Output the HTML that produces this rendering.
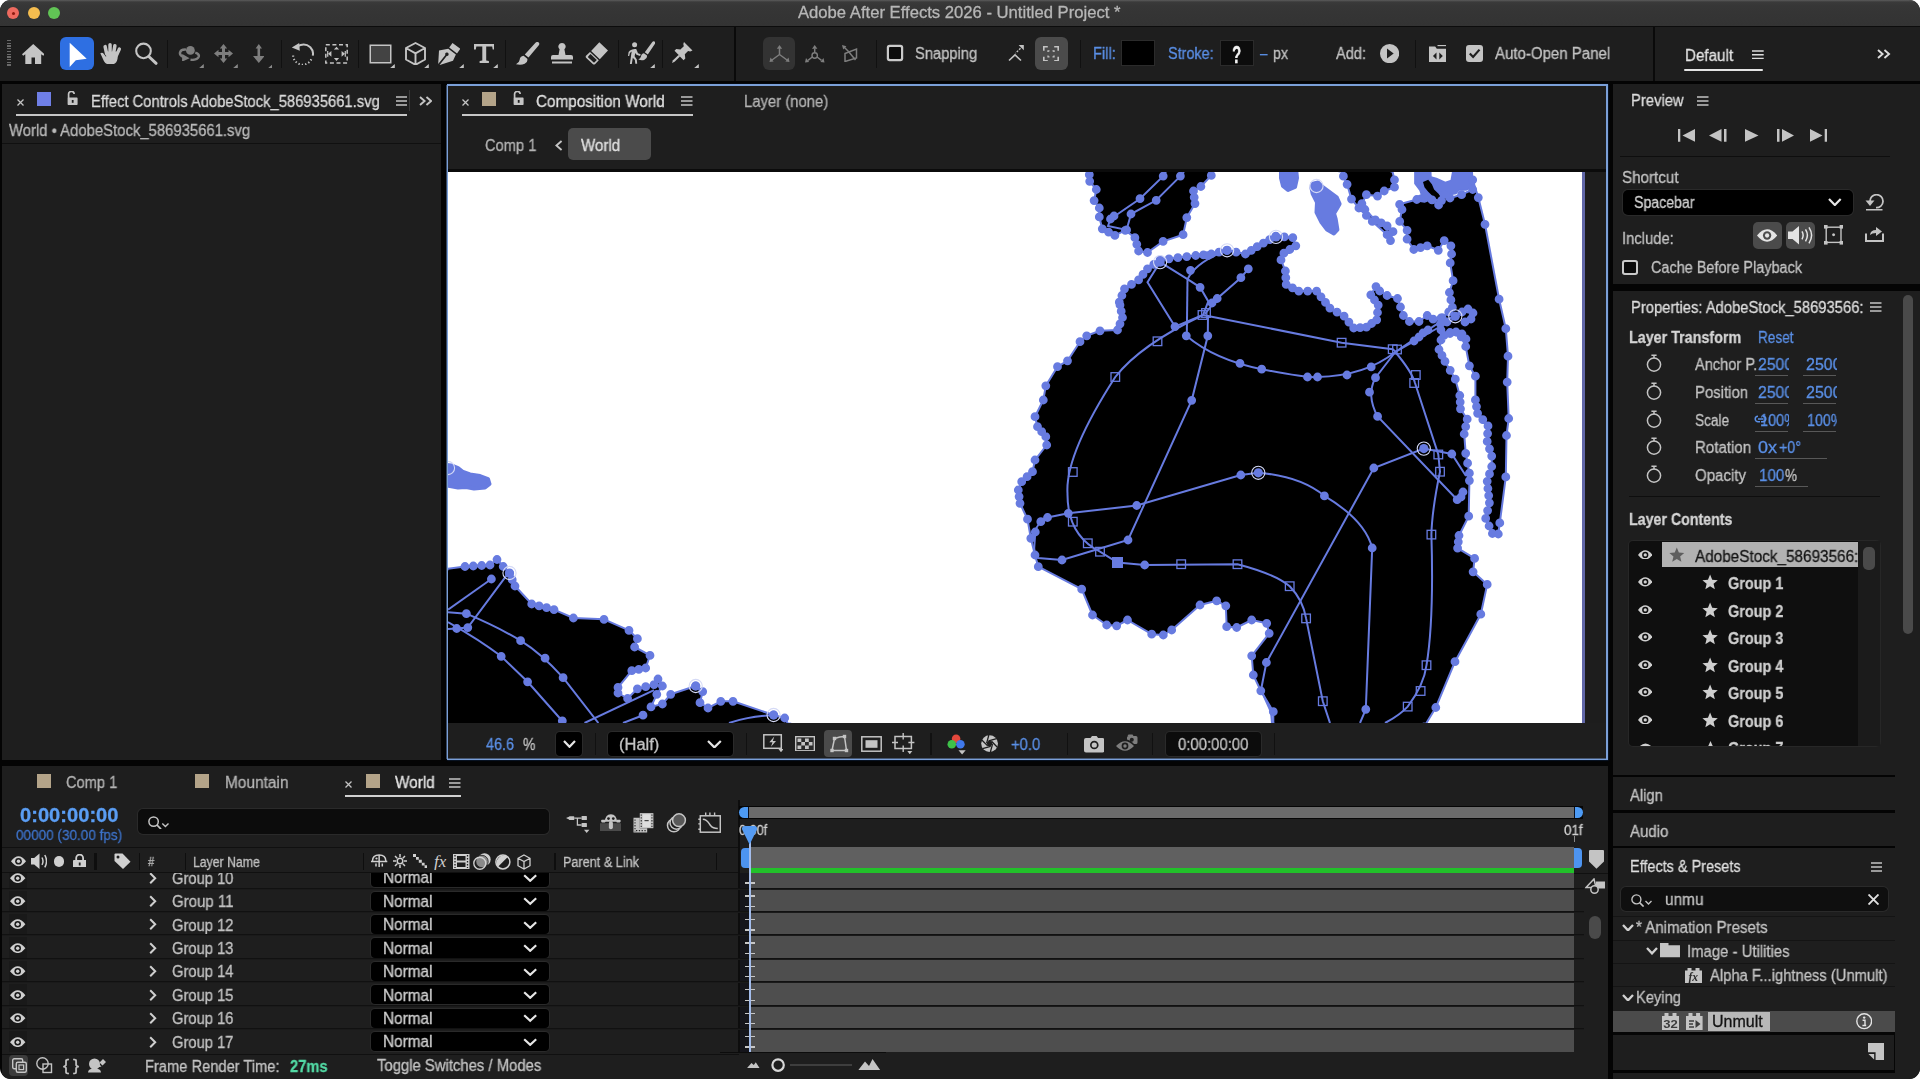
<!DOCTYPE html>
<html><head><meta charset="utf-8"><title>Adobe After Effects 2026</title><style>
html,body{margin:0;padding:0;background:#fff;}
body{width:1920px;height:1079px;overflow:hidden;position:relative;font-family:"Liberation Sans",sans-serif;}
#win{position:absolute;left:0;top:0;width:1920px;height:1079px;background:#040404;border-radius:11px;overflow:hidden;}
#win div,#win svg,#win span{position:absolute;}
#win span{white-space:pre;transform-origin:0 0;line-height:1;will-change:transform;-webkit-text-stroke:0.3px;}
</style></head><body><div id="win">
<div style="left:0px;top:0px;width:1920px;height:26px;background:linear-gradient(#5c5c5c 0px,#3a3a3a 2px,#363636 6px,#333333 26px);"></div>
<div style="left:0px;top:26px;width:1920px;height:1px;background:#0c0c0c;"></div>
<div style="left:7px;top:7px;width:12px;height:12px;background:#ee6a5f;border-radius:50%;"></div>
<div style="left:11.5px;top:11.5px;width:3px;height:3px;background:#8c1a10;border-radius:50%;"></div>
<div style="left:27.5px;top:7px;width:12px;height:12px;background:#f5bd4f;border-radius:50%;"></div>
<div style="left:48.4px;top:7px;width:12px;height:12px;background:#61c455;border-radius:50%;"></div>
<span style="left:797.5px;top:4.96px;font-size:16px;line-height:16px;color:#b6b6b6;font-weight:400;transform:scaleX(1.0400);">Adobe After Effects 2026 - Untitled Project *</span>
<div style="left:0px;top:27px;width:1920px;height:54px;background:#1e1e1e;"></div>
<div style="left:734px;top:27px;width:2px;height:54px;background:#0a0a0a;"></div>
<div style="left:1653px;top:27px;width:2px;height:54px;background:#0a0a0a;"></div>
<div style="left:167px;top:40px;width:1.2px;height:28px;background:#111111;"></div>
<div style="left:280.5px;top:40px;width:1.2px;height:28px;background:#111111;"></div>
<div style="left:357.8px;top:40px;width:1.2px;height:28px;background:#111111;"></div>
<div style="left:505.2px;top:40px;width:1.2px;height:28px;background:#111111;"></div>
<div style="left:618px;top:40px;width:1.2px;height:28px;background:#111111;"></div>
<div style="left:662.3px;top:40px;width:1.2px;height:28px;background:#111111;"></div>
<div style="left:876.2px;top:40px;width:1.2px;height:28px;background:#111111;"></div>
<div style="left:1080.2px;top:40px;width:1.2px;height:28px;background:#111111;"></div>
<div style="left:1415px;top:40px;width:1.2px;height:28px;background:#111111;"></div>
<span style="left:915.3px;top:46.06px;font-size:16px;line-height:16px;color:#c2c2c2;font-weight:400;transform:scaleX(0.9198);">Snapping</span>
<span style="left:1093px;top:46.06px;font-size:16px;line-height:16px;color:#5a8fe6;font-weight:400;transform:scaleX(0.9160);">Fill:</span>
<div style="left:1122px;top:41px;width:32px;height:24px;background:#000;box-shadow:0 0 0 1px #2b2b2b;"></div>
<span style="left:1168.3px;top:46.06px;font-size:16px;line-height:16px;color:#5a8fe6;font-weight:400;transform:scaleX(0.9016);">Stroke:</span>
<div style="left:1221px;top:41px;width:32px;height:24px;background:#0c0c0c;box-shadow:0 0 0 1px #2b2b2b;"></div>
<span style="left:1232px;top:43.48px;font-size:24px;line-height:24px;color:#f2f2f2;font-weight:700;transform:scaleX(0.6339);">?</span>
<span style="left:1260px;top:46.06px;font-size:16px;line-height:16px;color:#5a8fe6;font-weight:400;transform:scaleX(0.8421);">–</span>
<span style="left:1272.8px;top:46.06px;font-size:16px;line-height:16px;color:#c2c2c2;font-weight:400;transform:scaleX(0.8872);">px</span>
<span style="left:1336.3px;top:46.06px;font-size:16px;line-height:16px;color:#c2c2c2;font-weight:400;transform:scaleX(0.9112);">Add:</span>
<span style="left:1495.4px;top:46.06px;font-size:16px;line-height:16px;color:#c2c2c2;font-weight:400;transform:scaleX(0.9385);">Auto-Open Panel</span>
<span style="left:1685.2px;top:47.43px;font-size:16.5px;line-height:16.5px;color:#e2e2e2;font-weight:400;transform:scaleX(0.9200);">Default</span>
<div style="left:1684px;top:68.5px;width:79px;height:2.5px;background:#e4e4e4;border-radius:1px;"></div>
<div style="left:2px;top:84px;width:439px;height:676px;background:#1e1e1e;"></div>
<span style="left:91.3px;top:94.36px;font-size:16px;line-height:16px;color:#dadada;font-weight:400;transform:scaleX(0.9229);">Effect Controls AdobeStock_586935661.svg</span>
<div style="left:16px;top:113.8px;width:391px;height:1.8px;background:#c6c6c6;"></div>
<div style="left:408.5px;top:90px;width:1px;height:21px;background:#3a3a3a;"></div>
<span style="left:8.8px;top:122.66px;font-size:16px;line-height:16px;color:#b9b9b9;font-weight:400;transform:scaleX(0.9287);">World • AdobeStock_586935661.svg</span>
<div style="left:2px;top:142.5px;width:439px;height:1.3px;background:#101010;"></div>
<div style="left:36.8px;top:92px;width:14.5px;height:13.8px;background:#6f7fe6;"></div>
<div style="left:446.5px;top:84.2px;width:1161.6px;height:675.9px;background:#7a9fd8;box-shadow:0 0 1.5px 0.5px #163462;"></div>
<div style="left:448.1px;top:85.7px;width:1158.3px;height:672.9px;background:#1e1e1e;"></div>
<div style="left:446px;top:85px;width:1px;height:674px;background:#394a63;"></div>
<div style="left:448px;top:758px;width:1158px;height:1px;background:#475872;"></div>
<div style="left:482px;top:92px;width:14.3px;height:13.8px;background:#b4a489;"></div>
<span style="left:536.3px;top:94.36px;font-size:16px;line-height:16px;color:#e0e0e0;font-weight:400;transform:scaleX(0.9542);">Composition World</span>
<div style="left:462px;top:113.8px;width:230.5px;height:1.8px;background:#c6c6c6;"></div>
<span style="left:743.8px;top:94.36px;font-size:16px;line-height:16px;color:#b4b4b4;font-weight:400;transform:scaleX(0.9281);">Layer (none)</span>
<span style="left:485px;top:138.16px;font-size:16px;line-height:16px;color:#b4b4b4;font-weight:400;transform:scaleX(0.9156);">Comp 1</span>
<div style="left:568px;top:128.3px;width:83.3px;height:32.2px;background:#4b4b4b;border-radius:5px;"></div>
<span style="left:580.8px;top:138.16px;font-size:16px;line-height:16px;color:#e0e0e0;font-weight:400;transform:scaleX(0.9446);">World</span>
<div style="left:448px;top:169px;width:1158px;height:3px;background:#0b0b0b;"></div>
<div style="left:448px;top:172px;width:1134px;height:551px;background:#ffffff;"></div>
<div style="left:1582px;top:172px;width:3px;height:551px;background:#6167a8;"></div>
<div style="left:1585px;top:172px;width:21px;height:551px;background:#1d1d1d;"></div>
<span style="left:486px;top:736.76px;font-size:16px;line-height:16px;color:#5a8fe6;font-weight:400;transform:scaleX(0.8991);">46.6</span>
<span style="left:523px;top:736.76px;font-size:16px;line-height:16px;color:#c2c2c2;font-weight:400;transform:scaleX(0.8711);">%</span>
<div style="left:555.6px;top:732px;width:26.8px;height:24px;background:#000;border-radius:4px;box-shadow:0 0 0 1px #2a2a2a;"></div>
<div style="left:594.5px;top:733px;width:1.2px;height:22px;background:#111;"></div>
<div style="left:608px;top:732px;width:125.4px;height:24px;background:#000;border-radius:4px;box-shadow:0 0 0 1px #2a2a2a;"></div>
<span style="left:619.2px;top:736.76px;font-size:16px;line-height:16px;color:#c2c2c2;font-weight:400;transform:scaleX(1.0304);">(Half)</span>
<div style="left:745.9px;top:733px;width:1.2px;height:22px;background:#111;"></div>
<div style="left:824.3px;top:730px;width:27.7px;height:27px;background:#4b4b4b;border-radius:4px;"></div>
<div style="left:930.4px;top:733px;width:1.2px;height:22px;background:#111;"></div>
<span style="left:1011px;top:736.76px;font-size:16px;line-height:16px;color:#5a8fe6;font-weight:400;transform:scaleX(0.9242);">+0.0</span>
<div style="left:1067px;top:733px;width:1.2px;height:22px;background:#111;"></div>
<div style="left:1152px;top:733px;width:1.2px;height:22px;background:#111;"></div>
<div style="left:1165.6px;top:732.2px;width:95px;height:24.2px;background:#0c0c0c;border-radius:4px;box-shadow:0 0 0 1px #2a2a2a;"></div>
<span style="left:1178.1px;top:736.76px;font-size:16px;line-height:16px;color:#c2c2c2;font-weight:400;transform:scaleX(0.9309);">0:00:00:00</span>
<div style="left:1274px;top:733px;width:1.2px;height:22px;background:#111;"></div>
<div style="left:1613.2px;top:84px;width:306.8px;height:200px;background:#1e1e1e;"></div>
<span style="left:1630.6px;top:93.46px;font-size:16px;line-height:16px;color:#dcdcdc;font-weight:400;transform:scaleX(0.9243);">Preview</span>
<div style="left:1620px;top:156px;width:270px;height:1.3px;background:#0e0e0e;"></div>
<span style="left:1622px;top:169.96px;font-size:16px;line-height:16px;color:#c2c2c2;font-weight:400;transform:scaleX(0.9481);">Shortcut</span>
<div style="left:1622.8px;top:190.1px;width:230.5px;height:24.5px;background:#000;border-radius:5px;box-shadow:0 0 0 1px #2a2a2a;"></div>
<span style="left:1634.3px;top:195.46px;font-size:16px;line-height:16px;color:#d0d0d0;font-weight:400;transform:scaleX(0.8832);">Spacebar</span>
<span style="left:1622px;top:230.56px;font-size:16px;line-height:16px;color:#c2c2c2;font-weight:400;transform:scaleX(0.9242);">Include:</span>
<div style="left:1752.6px;top:221.7px;width:29.5px;height:27.2px;background:#4b4b4b;border-radius:5px;"></div>
<div style="left:1785.6px;top:221.7px;width:29.6px;height:27.2px;background:#4b4b4b;border-radius:5px;"></div>
<span style="left:1651px;top:260.06px;font-size:16px;line-height:16px;color:#c2c2c2;font-weight:400;transform:scaleX(0.9031);">Cache Before Playback</span>
<div style="left:1613.2px;top:290.5px;width:306.8px;height:484.5px;background:#1e1e1e;"></div>
<span style="left:1630.6px;top:299.96px;font-size:16px;line-height:16px;color:#dcdcdc;font-weight:400;transform:scaleX(0.9235);">Properties: AdobeStock_58693566:</span>
<div style="left:1902.5px;top:295.3px;width:10.4px;height:339px;background:#4a4a4a;border-radius:5px;"></div>
<span style="left:1629.2px;top:329.56px;font-size:16px;line-height:16px;color:#d6d6d6;font-weight:700;transform:scaleX(0.8940);">Layer Transform</span>
<span style="left:1758.3px;top:329.56px;font-size:16px;line-height:16px;color:#5a8fe6;font-weight:400;transform:scaleX(0.8493);">Reset</span>
<span style="left:1694.8px;top:357.06px;font-size:16px;line-height:16px;color:#c2c2c2;font-weight:400;transform:scaleX(0.9120);">Anchor P.</span>
<span style="left:1758px;top:357.06px;font-size:16px;line-height:16px;color:#5a8fe6;font-weight:400;transform:scaleX(0.9833);">2500</span>
<span style="left:1805.6px;top:357.06px;font-size:16px;line-height:16px;color:#5a8fe6;font-weight:400;transform:scaleX(0.9946);">2500</span>
<span style="left:1694.8px;top:384.66px;font-size:16px;line-height:16px;color:#c2c2c2;font-weight:400;transform:scaleX(0.9329);">Position</span>
<span style="left:1758px;top:384.66px;font-size:16px;line-height:16px;color:#5a8fe6;font-weight:400;transform:scaleX(0.9833);">2500</span>
<span style="left:1805.6px;top:384.66px;font-size:16px;line-height:16px;color:#5a8fe6;font-weight:400;transform:scaleX(0.9946);">2500</span>
<span style="left:1694.8px;top:412.56px;font-size:16px;line-height:16px;color:#c2c2c2;font-weight:400;transform:scaleX(0.8518);">Scale</span>
<span style="left:1760px;top:412.56px;font-size:16px;line-height:16px;color:#5a8fe6;font-weight:400;transform:scaleX(0.9042);">100%</span>
<span style="left:1806.5px;top:412.56px;font-size:16px;line-height:16px;color:#5a8fe6;font-weight:400;transform:scaleX(0.8919);">100%</span>
<span style="left:1694.8px;top:440.36px;font-size:16px;line-height:16px;color:#c2c2c2;font-weight:400;transform:scaleX(0.9414);">Rotation</span>
<span style="left:1758px;top:440.36px;font-size:16px;line-height:16px;color:#5a8fe6;font-weight:400;transform:scaleX(1.1238);">0x</span>
<span style="left:1779px;top:440.36px;font-size:16px;line-height:16px;color:#5a8fe6;font-weight:400;transform:scaleX(0.8928);">+0°</span>
<span style="left:1694.8px;top:467.86px;font-size:16px;line-height:16px;color:#c2c2c2;font-weight:400;transform:scaleX(0.9401);">Opacity</span>
<span style="left:1758.7px;top:467.86px;font-size:16px;line-height:16px;color:#5a8fe6;font-weight:400;transform:scaleX(0.9475);">100</span>
<span style="left:1785px;top:467.86px;font-size:16px;line-height:16px;color:#c2c2c2;font-weight:400;transform:scaleX(0.8430);">%</span>
<div style="left:1789px;top:354px;width:14px;height:20px;background:#1e1e1e;"></div>
<div style="left:1837px;top:354px;width:30px;height:20px;background:#1e1e1e;"></div>
<div style="left:1789px;top:382px;width:14px;height:20px;background:#1e1e1e;"></div>
<div style="left:1837px;top:382px;width:30px;height:20px;background:#1e1e1e;"></div>
<div style="left:1789px;top:410px;width:14px;height:20px;background:#1e1e1e;"></div>
<div style="left:1837px;top:410px;width:30px;height:20px;background:#1e1e1e;"></div>
<div style="left:1755px;top:375.3px;width:32.6px;height:1.2px;background:#585858;"></div>
<div style="left:1803px;top:375.3px;width:32.6px;height:1.2px;background:#585858;"></div>
<div style="left:1755px;top:402.9px;width:32.6px;height:1.2px;background:#585858;"></div>
<div style="left:1803px;top:402.9px;width:32.6px;height:1.2px;background:#585858;"></div>
<div style="left:1755px;top:430.8px;width:32.6px;height:1.2px;background:#585858;"></div>
<div style="left:1803px;top:430.8px;width:32.6px;height:1.2px;background:#585858;"></div>
<div style="left:1755px;top:458.3px;width:72.4px;height:1.2px;background:#585858;"></div>
<div style="left:1755px;top:485.8px;width:53px;height:1.2px;background:#585858;"></div>
<div style="left:1628.6px;top:495.6px;width:251px;height:1.3px;background:#0e0e0e;"></div>
<span style="left:1629px;top:511.66px;font-size:16px;line-height:16px;color:#d6d6d6;font-weight:700;transform:scaleX(0.8878);">Layer Contents</span>
<div style="left:1629px;top:540.6px;width:251.3px;height:205px;background:#0f0f0f;border-radius:4px;box-shadow:0 0 0 1px #272727;"></div>
<div style="left:1858.2px;top:541px;width:22px;height:204.5px;background:#1b1b1b;"></div>
<div style="left:1863.4px;top:547.1px;width:11.2px;height:22.8px;background:#4a4a4a;border-radius:5px;"></div>
<div style="left:1661.5px;top:541.9px;width:196.7px;height:25.4px;background:#b2b2b2;"></div>
<span style="left:1694.7px;top:548.76px;font-size:16px;line-height:16px;color:#161616;font-weight:400;transform:scaleX(0.9560);">AdobeStock_58693566:</span>
<span style="left:1727.7px;top:576.46px;font-size:16px;line-height:16px;color:#cfcfcf;font-weight:700;transform:scaleX(0.9015);">Group 1</span>
<span style="left:1727.7px;top:603.96px;font-size:16px;line-height:16px;color:#cfcfcf;font-weight:700;transform:scaleX(0.9015);">Group 2</span>
<span style="left:1727.7px;top:631.46px;font-size:16px;line-height:16px;color:#cfcfcf;font-weight:700;transform:scaleX(0.9015);">Group 3</span>
<span style="left:1727.7px;top:658.96px;font-size:16px;line-height:16px;color:#cfcfcf;font-weight:700;transform:scaleX(0.9015);">Group 4</span>
<span style="left:1727.7px;top:686.46px;font-size:16px;line-height:16px;color:#cfcfcf;font-weight:700;transform:scaleX(0.9015);">Group 5</span>
<span style="left:1727.7px;top:713.96px;font-size:16px;line-height:16px;color:#cfcfcf;font-weight:700;transform:scaleX(0.9015);">Group 6</span>
<div style="left:1629px;top:738px;width:229px;height:7.6px;overflow:hidden;">
<span style="left:98.7px;top:3.46px;font-size:16px;line-height:16px;color:#cfcfcf;font-weight:700;transform:scaleX(0.9015);">Group 7</span>
<svg style="left:73px;top:3px" width="17" height="16" viewBox="0 0 17 16"><path d="M8.5 0l2.5 5.6 6 .6-4.5 4 1.3 5.8-5.3-3.1-5.3 3.1 1.3-5.8-4.5-4 6-.6z" fill="#cfcfcf"/></svg>
<svg style="left:8.6px;top:5px" width="15" height="10" viewBox="0 0 15 10"><path d="M0 5Q7.5-4 15 5Q7.5 14 0 5z" fill="#cfcfcf"/></svg>
</div>
<div style="left:1613.2px;top:777px;width:281.5px;height:33.3px;background:#1e1e1e;"></div>
<div style="left:1894.5px;top:770px;width:25.5px;height:309px;background:#1e1e1e;"></div>
<span style="left:1630.2px;top:788.16px;font-size:16px;line-height:16px;color:#c2c2c2;font-weight:400;transform:scaleX(0.9219);">Align</span>
<div style="left:1613.2px;top:812.6px;width:281.5px;height:33.2px;background:#1e1e1e;"></div>
<span style="left:1630.2px;top:823.66px;font-size:16px;line-height:16px;color:#c2c2c2;font-weight:400;transform:scaleX(0.9384);">Audio</span>
<div style="left:1613.2px;top:848.1px;width:281.5px;height:222.4px;background:#1e1e1e;"></div>
<div style="left:1613.2px;top:1072.6px;width:281.5px;height:7px;background:#1e1e1e;"></div>
<span style="left:1630.2px;top:859.16px;font-size:16px;line-height:16px;color:#dedede;font-weight:400;transform:scaleX(0.9034);">Effects &amp; Presets</span>
<div style="left:1621.3px;top:886.6px;width:267px;height:24.8px;background:#0f0f0f;border-radius:5px;box-shadow:0 0 0 1px #2a2a2a;"></div>
<span style="left:1665px;top:892.26px;font-size:16px;line-height:16px;color:#c2c2c2;font-weight:400;transform:scaleX(0.9617);">unmu</span>
<div style="left:1613.2px;top:915.9px;width:281.5px;height:1.2px;background:#141414;"></div>
<div style="left:1613.2px;top:939.5px;width:281.5px;height:1.2px;background:#141414;"></div>
<div style="left:1613.2px;top:962.6px;width:281.5px;height:1.2px;background:#141414;"></div>
<div style="left:1613.2px;top:986.3px;width:281.5px;height:1.2px;background:#141414;"></div>
<span style="left:1635.5px;top:920.36px;font-size:16px;line-height:16px;color:#c2c2c2;font-weight:400;transform:scaleX(0.9425);">* Animation Presets</span>
<span style="left:1686.7px;top:944.06px;font-size:16px;line-height:16px;color:#c2c2c2;font-weight:400;transform:scaleX(0.9306);">Image - Utilities</span>
<span style="left:1710px;top:967.66px;font-size:16px;line-height:16px;color:#c2c2c2;font-weight:400;transform:scaleX(0.9241);">Alpha F...ightness (Unmult)</span>
<span style="left:1635.5px;top:990.46px;font-size:16px;line-height:16px;color:#c2c2c2;font-weight:400;transform:scaleX(0.9178);">Keying</span>
<div style="left:1613.2px;top:1010.8px;width:281.5px;height:21.3px;background:#4b4b4b;"></div>
<div style="left:1708px;top:1012px;width:62px;height:19.4px;background:#b8b8b8;"></div>
<span style="left:1711.8px;top:1014.16px;font-size:16px;line-height:16px;color:#141414;font-weight:400;transform:scaleX(0.9904);">Unmult</span>
<div style="left:1613.2px;top:1032.1px;width:281.5px;height:2.6px;background:#060606;"></div>
<div style="left:1894.3px;top:1034px;width:1.2px;height:37px;background:#060606;"></div>
<div style="left:2px;top:765.6px;width:1606.1px;height:313.4px;background:#1e1e1e;"></div>
<div style="left:36.8px;top:773.8px;width:14.4px;height:13.8px;background:#b4a489;"></div>
<div style="left:195px;top:773.8px;width:14.4px;height:13.8px;background:#b4a489;"></div>
<div style="left:365.5px;top:773.8px;width:14.4px;height:13.8px;background:#b4a489;"></div>
<span style="left:66.3px;top:775.36px;font-size:16px;line-height:16px;color:#b4b4b4;font-weight:400;transform:scaleX(0.9138);">Comp 1</span>
<span style="left:224.5px;top:775.36px;font-size:16px;line-height:16px;color:#b4b4b4;font-weight:400;transform:scaleX(0.9646);">Mountain</span>
<span style="left:394.5px;top:775.36px;font-size:16px;line-height:16px;color:#e4e4e4;font-weight:400;transform:scaleX(0.9590);">World</span>
<div style="left:345px;top:795.2px;width:115.5px;height:1.8px;background:#d0d0d0;"></div>
<span style="left:19.5px;top:805.69px;font-size:19.5px;line-height:19.5px;color:#5a9df3;font-weight:700;transform:scaleX(1.0324);">0:00:00:00</span>
<span style="left:16.3px;top:828.13px;font-size:14.5px;line-height:14.5px;color:#3d72c8;font-weight:400;transform:scaleX(0.9343);">00000 (30.00 fps)</span>
<div style="left:138.3px;top:809.3px;width:411.2px;height:25.2px;background:#0c0c0c;border-radius:5px;box-shadow:0 0 0 1px #2a2a2a;"></div>
<div style="left:2px;top:846.6px;width:737px;height:1.3px;background:#101010;"></div>
<div style="left:93.8px;top:853px;width:3.2px;height:17px;background:#0e0e0e;"></div>
<div style="left:138.8px;top:853px;width:1.6px;height:17px;background:#0e0e0e;"></div>
<div style="left:184.5px;top:853px;width:1.6px;height:17px;background:#0e0e0e;"></div>
<div style="left:362.5px;top:853px;width:1.6px;height:17px;background:#0e0e0e;"></div>
<div style="left:554.2px;top:853px;width:1.6px;height:17px;background:#0e0e0e;"></div>
<div style="left:715.8px;top:853px;width:1.6px;height:17px;background:#0e0e0e;"></div>
<span style="left:147.5px;top:855.40px;font-size:13px;line-height:13px;color:#c2c2c2;font-weight:400;transform:scaleX(0.8708);">#</span>
<span style="left:192.5px;top:854.85px;font-size:14px;line-height:14px;color:#c2c2c2;font-weight:400;transform:scaleX(0.8759);">Layer Name</span>
<span style="left:563.3px;top:854.55px;font-size:14px;line-height:14px;color:#c2c2c2;font-weight:400;transform:scaleX(0.9041);">Parent &amp; Link</span>
<div style="left:2px;top:872.2px;width:737px;height:1px;background:#101010;"></div>
<div style="left:2px;top:873px;width:737px;height:181px;overflow:hidden;">
<div style="left:6.7px;top:-5.900000000000045px;width:18.3px;height:21.4px;background:#191919;"></div>
<span style="left:170.2px;top:-2.34px;font-size:16px;line-height:16px;color:#c2c2c2;font-weight:400;transform:scaleX(0.9203);">Group 10</span>
<div style="left:369px;top:-4.800000000000045px;width:178px;height:19.2px;background:#000;border-radius:4px;box-shadow:0 0 0 1px #2a2a2a;"></div>
<span style="left:380.8px;top:-2.54px;font-size:16px;line-height:16px;color:#d0d0d0;font-weight:400;transform:scaleX(0.9600);">Normal</span>
<svg style="left:8.2px;top:-0.4px" width="15.4" height="10.4" viewBox="0 0 15.4 10.4"><path d="M0 5.2Q7.7-4.6 15.4 5.2Q7.7 15 0 5.2z" fill="#cfcfcf"/><circle cx="7.7" cy="5.2" r="3.3" fill="#191919"/><circle cx="7.7" cy="5.2" r="1.7" fill="#cfcfcf"/></svg>
<svg style="left:147.4px;top:-1.4px" width="8" height="12.4" viewBox="0 0 8 12.4"><path d="M1.2 1.2l5 5-5 5" fill="none" stroke="#cfcfcf" stroke-width="2"/></svg>
<svg style="left:521.4px;top:0.8px" width="14.4" height="8.4" viewBox="0 0 14.4 8.4"><path d="M1.2 1.2l6 5.6 6-5.6" fill="none" stroke="#e6e6e6" stroke-width="2.2"/></svg>
<div style="left:6.7px;top:17.519999999999957px;width:18.3px;height:21.4px;background:#191919;"></div>
<span style="left:170.2px;top:21.08px;font-size:16px;line-height:16px;color:#c2c2c2;font-weight:400;transform:scaleX(0.9370);">Group 11</span>
<div style="left:369px;top:18.619999999999955px;width:178px;height:19.2px;background:#000;border-radius:4px;box-shadow:0 0 0 1px #2a2a2a;"></div>
<span style="left:380.8px;top:20.88px;font-size:16px;line-height:16px;color:#d0d0d0;font-weight:400;transform:scaleX(0.9600);">Normal</span>
<svg style="left:8.2px;top:23.0px" width="15.4" height="10.4" viewBox="0 0 15.4 10.4"><path d="M0 5.2Q7.7-4.6 15.4 5.2Q7.7 15 0 5.2z" fill="#cfcfcf"/><circle cx="7.7" cy="5.2" r="3.3" fill="#191919"/><circle cx="7.7" cy="5.2" r="1.7" fill="#cfcfcf"/></svg>
<svg style="left:147.4px;top:22.0px" width="8" height="12.4" viewBox="0 0 8 12.4"><path d="M1.2 1.2l5 5-5 5" fill="none" stroke="#cfcfcf" stroke-width="2"/></svg>
<svg style="left:521.4px;top:24.2px" width="14.4" height="8.4" viewBox="0 0 14.4 8.4"><path d="M1.2 1.2l6 5.6 6-5.6" fill="none" stroke="#e6e6e6" stroke-width="2.2"/></svg>
<div style="left:6.7px;top:40.939999999999955px;width:18.3px;height:21.4px;background:#191919;"></div>
<span style="left:170.2px;top:44.50px;font-size:16px;line-height:16px;color:#c2c2c2;font-weight:400;transform:scaleX(0.9203);">Group 12</span>
<div style="left:369px;top:42.03999999999996px;width:178px;height:19.2px;background:#000;border-radius:4px;box-shadow:0 0 0 1px #2a2a2a;"></div>
<span style="left:380.8px;top:44.30px;font-size:16px;line-height:16px;color:#d0d0d0;font-weight:400;transform:scaleX(0.9600);">Normal</span>
<svg style="left:8.2px;top:46.4px" width="15.4" height="10.4" viewBox="0 0 15.4 10.4"><path d="M0 5.2Q7.7-4.6 15.4 5.2Q7.7 15 0 5.2z" fill="#cfcfcf"/><circle cx="7.7" cy="5.2" r="3.3" fill="#191919"/><circle cx="7.7" cy="5.2" r="1.7" fill="#cfcfcf"/></svg>
<svg style="left:147.4px;top:45.4px" width="8" height="12.4" viewBox="0 0 8 12.4"><path d="M1.2 1.2l5 5-5 5" fill="none" stroke="#cfcfcf" stroke-width="2"/></svg>
<svg style="left:521.4px;top:47.6px" width="14.4" height="8.4" viewBox="0 0 14.4 8.4"><path d="M1.2 1.2l6 5.6 6-5.6" fill="none" stroke="#e6e6e6" stroke-width="2.2"/></svg>
<div style="left:6.7px;top:64.35999999999996px;width:18.3px;height:21.4px;background:#191919;"></div>
<span style="left:170.2px;top:67.92px;font-size:16px;line-height:16px;color:#c2c2c2;font-weight:400;transform:scaleX(0.9203);">Group 13</span>
<div style="left:369px;top:65.45999999999997px;width:178px;height:19.2px;background:#000;border-radius:4px;box-shadow:0 0 0 1px #2a2a2a;"></div>
<span style="left:380.8px;top:67.72px;font-size:16px;line-height:16px;color:#d0d0d0;font-weight:400;transform:scaleX(0.9600);">Normal</span>
<svg style="left:8.2px;top:69.9px" width="15.4" height="10.4" viewBox="0 0 15.4 10.4"><path d="M0 5.2Q7.7-4.6 15.4 5.2Q7.7 15 0 5.2z" fill="#cfcfcf"/><circle cx="7.7" cy="5.2" r="3.3" fill="#191919"/><circle cx="7.7" cy="5.2" r="1.7" fill="#cfcfcf"/></svg>
<svg style="left:147.4px;top:68.9px" width="8" height="12.4" viewBox="0 0 8 12.4"><path d="M1.2 1.2l5 5-5 5" fill="none" stroke="#cfcfcf" stroke-width="2"/></svg>
<svg style="left:521.4px;top:71.1px" width="14.4" height="8.4" viewBox="0 0 14.4 8.4"><path d="M1.2 1.2l6 5.6 6-5.6" fill="none" stroke="#e6e6e6" stroke-width="2.2"/></svg>
<div style="left:6.7px;top:87.77999999999996px;width:18.3px;height:21.4px;background:#191919;"></div>
<span style="left:170.2px;top:91.34px;font-size:16px;line-height:16px;color:#c2c2c2;font-weight:400;transform:scaleX(0.9203);">Group 14</span>
<div style="left:369px;top:88.87999999999997px;width:178px;height:19.2px;background:#000;border-radius:4px;box-shadow:0 0 0 1px #2a2a2a;"></div>
<span style="left:380.8px;top:91.14px;font-size:16px;line-height:16px;color:#d0d0d0;font-weight:400;transform:scaleX(0.9600);">Normal</span>
<svg style="left:8.2px;top:93.3px" width="15.4" height="10.4" viewBox="0 0 15.4 10.4"><path d="M0 5.2Q7.7-4.6 15.4 5.2Q7.7 15 0 5.2z" fill="#cfcfcf"/><circle cx="7.7" cy="5.2" r="3.3" fill="#191919"/><circle cx="7.7" cy="5.2" r="1.7" fill="#cfcfcf"/></svg>
<svg style="left:147.4px;top:92.3px" width="8" height="12.4" viewBox="0 0 8 12.4"><path d="M1.2 1.2l5 5-5 5" fill="none" stroke="#cfcfcf" stroke-width="2"/></svg>
<svg style="left:521.4px;top:94.5px" width="14.4" height="8.4" viewBox="0 0 14.4 8.4"><path d="M1.2 1.2l6 5.6 6-5.6" fill="none" stroke="#e6e6e6" stroke-width="2.2"/></svg>
<div style="left:6.7px;top:111.19999999999996px;width:18.3px;height:21.4px;background:#191919;"></div>
<span style="left:170.2px;top:114.76px;font-size:16px;line-height:16px;color:#c2c2c2;font-weight:400;transform:scaleX(0.9203);">Group 15</span>
<div style="left:369px;top:112.29999999999997px;width:178px;height:19.2px;background:#000;border-radius:4px;box-shadow:0 0 0 1px #2a2a2a;"></div>
<span style="left:380.8px;top:114.56px;font-size:16px;line-height:16px;color:#d0d0d0;font-weight:400;transform:scaleX(0.9600);">Normal</span>
<svg style="left:8.2px;top:116.7px" width="15.4" height="10.4" viewBox="0 0 15.4 10.4"><path d="M0 5.2Q7.7-4.6 15.4 5.2Q7.7 15 0 5.2z" fill="#cfcfcf"/><circle cx="7.7" cy="5.2" r="3.3" fill="#191919"/><circle cx="7.7" cy="5.2" r="1.7" fill="#cfcfcf"/></svg>
<svg style="left:147.4px;top:115.7px" width="8" height="12.4" viewBox="0 0 8 12.4"><path d="M1.2 1.2l5 5-5 5" fill="none" stroke="#cfcfcf" stroke-width="2"/></svg>
<svg style="left:521.4px;top:117.9px" width="14.4" height="8.4" viewBox="0 0 14.4 8.4"><path d="M1.2 1.2l6 5.6 6-5.6" fill="none" stroke="#e6e6e6" stroke-width="2.2"/></svg>
<div style="left:6.7px;top:134.61999999999998px;width:18.3px;height:21.4px;background:#191919;"></div>
<span style="left:170.2px;top:138.18px;font-size:16px;line-height:16px;color:#c2c2c2;font-weight:400;transform:scaleX(0.9203);">Group 16</span>
<div style="left:369px;top:135.71999999999997px;width:178px;height:19.2px;background:#000;border-radius:4px;box-shadow:0 0 0 1px #2a2a2a;"></div>
<span style="left:380.8px;top:137.98px;font-size:16px;line-height:16px;color:#d0d0d0;font-weight:400;transform:scaleX(0.9600);">Normal</span>
<svg style="left:8.2px;top:140.1px" width="15.4" height="10.4" viewBox="0 0 15.4 10.4"><path d="M0 5.2Q7.7-4.6 15.4 5.2Q7.7 15 0 5.2z" fill="#cfcfcf"/><circle cx="7.7" cy="5.2" r="3.3" fill="#191919"/><circle cx="7.7" cy="5.2" r="1.7" fill="#cfcfcf"/></svg>
<svg style="left:147.4px;top:139.1px" width="8" height="12.4" viewBox="0 0 8 12.4"><path d="M1.2 1.2l5 5-5 5" fill="none" stroke="#cfcfcf" stroke-width="2"/></svg>
<svg style="left:521.4px;top:141.3px" width="14.4" height="8.4" viewBox="0 0 14.4 8.4"><path d="M1.2 1.2l6 5.6 6-5.6" fill="none" stroke="#e6e6e6" stroke-width="2.2"/></svg>
<div style="left:6.7px;top:158.03999999999996px;width:18.3px;height:21.4px;background:#191919;"></div>
<span style="left:170.2px;top:161.60px;font-size:16px;line-height:16px;color:#c2c2c2;font-weight:400;transform:scaleX(0.9203);">Group 17</span>
<div style="left:369px;top:159.13999999999996px;width:178px;height:19.2px;background:#000;border-radius:4px;box-shadow:0 0 0 1px #2a2a2a;"></div>
<span style="left:380.8px;top:161.40px;font-size:16px;line-height:16px;color:#d0d0d0;font-weight:400;transform:scaleX(0.9600);">Normal</span>
<svg style="left:8.2px;top:163.5px" width="15.4" height="10.4" viewBox="0 0 15.4 10.4"><path d="M0 5.2Q7.7-4.6 15.4 5.2Q7.7 15 0 5.2z" fill="#cfcfcf"/><circle cx="7.7" cy="5.2" r="3.3" fill="#191919"/><circle cx="7.7" cy="5.2" r="1.7" fill="#cfcfcf"/></svg>
<svg style="left:147.4px;top:162.5px" width="8" height="12.4" viewBox="0 0 8 12.4"><path d="M1.2 1.2l5 5-5 5" fill="none" stroke="#cfcfcf" stroke-width="2"/></svg>
<svg style="left:521.4px;top:164.7px" width="14.4" height="8.4" viewBox="0 0 14.4 8.4"><path d="M1.2 1.2l6 5.6 6-5.6" fill="none" stroke="#e6e6e6" stroke-width="2.2"/></svg>
</div>
<div style="left:2px;top:1053.6px;width:737px;height:1.2px;background:#101010;"></div>
<div style="left:8.7px;top:1054.8px;width:19.8px;height:21px;background:#3c3c3c;border-radius:4px;"></div>
<span style="left:144.5px;top:1059.16px;font-size:16px;line-height:16px;color:#c2c2c2;font-weight:400;transform:scaleX(0.9174);">Frame Render Time:</span>
<span style="left:290.2px;top:1059.16px;font-size:16px;line-height:16px;color:#52d9a4;font-weight:700;transform:scaleX(0.9188);">27ms</span>
<span style="left:377.3px;top:1057.76px;font-size:16px;line-height:16px;color:#c2c2c2;font-weight:400;transform:scaleX(0.9283);">Toggle Switches / Modes</span>
<div style="left:738.3px;top:800px;width:1.4px;height:253px;background:#0d0d0d;"></div>
<div style="left:739.2px;top:805.6px;width:844px;height:13.2px;background:#060606;"></div>
<div style="left:739.4px;top:807px;width:843.2px;height:10.8px;background:#4d9bf5;border-radius:5.4px;"></div>
<div style="left:749px;top:806.8px;width:825px;height:11px;background:#6b6b6b;"></div>
<div style="left:748px;top:806.8px;width:1.1px;height:11px;background:#0a1020;"></div>
<div style="left:1573.8px;top:806.8px;width:1.1px;height:11px;background:#0a1020;"></div>
<span style="left:739.3px;top:822.65px;font-size:14px;line-height:14px;color:#d0d0d0;font-weight:400;transform:scaleX(0.9056);">0:00f</span>
<span style="left:1563.8px;top:822.65px;font-size:14px;line-height:14px;color:#d0d0d0;font-weight:400;transform:scaleX(0.9605);">01f</span>
<div style="left:1574px;top:836px;width:1px;height:6px;background:#888;"></div>
<div style="left:741px;top:847.5px;width:8px;height:20px;background:#4d94f0;border-radius:4px 0 0 4px;"></div>
<div style="left:1574px;top:847.5px;width:7.6px;height:20px;background:#4d94f0;border-radius:0 4px 4px 0;"></div>
<div style="left:749px;top:847px;width:825px;height:21px;background:#606060;"></div>
<div style="left:749px;top:868.1px;width:825px;height:4.6px;background:#22c12a;"></div>
<div style="left:739.7px;top:873px;width:9.3px;height:179px;background:#15151b;"></div>
<div style="left:749px;top:873px;width:825px;height:178.5px;background:#4e4e4e;"></div>
<div style="left:2px;top:888px;width:1581.5px;height:2px;background:linear-gradient(#111111 0,#111111 1px,#1a1a1a 1px,#1a1a1a 2px);"></div>
<div style="left:2px;top:911px;width:1581.5px;height:2px;background:linear-gradient(#111111 0,#111111 1px,#1a1a1a 1px,#1a1a1a 2px);"></div>
<div style="left:2px;top:934px;width:1581.5px;height:2px;background:linear-gradient(#111111 0,#111111 1px,#1a1a1a 1px,#1a1a1a 2px);"></div>
<div style="left:2px;top:958px;width:1581.5px;height:2px;background:linear-gradient(#111111 0,#111111 1px,#1a1a1a 1px,#1a1a1a 2px);"></div>
<div style="left:2px;top:981px;width:1581.5px;height:2px;background:linear-gradient(#111111 0,#111111 1px,#1a1a1a 1px,#1a1a1a 2px);"></div>
<div style="left:2px;top:1005px;width:1581.5px;height:2px;background:linear-gradient(#111111 0,#111111 1px,#1a1a1a 1px,#1a1a1a 2px);"></div>
<div style="left:2px;top:1028px;width:1581.5px;height:2px;background:linear-gradient(#111111 0,#111111 1px,#1a1a1a 1px,#1a1a1a 2px);"></div>
<div style="left:720px;top:1052px;width:166.4px;height:1.3px;background:#0c0c0c;"></div>
<div style="left:749.3px;top:873.8px;width:2.2px;height:9.799999999999955px;background:#c9d0e4;"></div>
<div style="left:744.7px;top:882.4px;width:10.3px;height:1.4px;background:#c6c6c6;"></div>
<div style="left:749.3px;top:895.42px;width:2.2px;height:11.599999999999909px;background:#c9d0e4;"></div>
<div style="left:744.7px;top:895.42px;width:10.3px;height:1.4px;background:#c6c6c6;"></div>
<div style="left:744.7px;top:905.8199999999999px;width:10.3px;height:1.4px;background:#c6c6c6;"></div>
<div style="left:749.3px;top:918.84px;width:2.2px;height:11.599999999999909px;background:#c9d0e4;"></div>
<div style="left:744.7px;top:918.84px;width:10.3px;height:1.4px;background:#c6c6c6;"></div>
<div style="left:744.7px;top:929.24px;width:10.3px;height:1.4px;background:#c6c6c6;"></div>
<div style="left:749.3px;top:942.26px;width:2.2px;height:11.599999999999909px;background:#c9d0e4;"></div>
<div style="left:744.7px;top:942.26px;width:10.3px;height:1.4px;background:#c6c6c6;"></div>
<div style="left:744.7px;top:952.66px;width:10.3px;height:1.4px;background:#c6c6c6;"></div>
<div style="left:749.3px;top:965.6800000000001px;width:2.2px;height:11.599999999999909px;background:#c9d0e4;"></div>
<div style="left:744.7px;top:965.6800000000001px;width:10.3px;height:1.4px;background:#c6c6c6;"></div>
<div style="left:744.7px;top:976.08px;width:10.3px;height:1.4px;background:#c6c6c6;"></div>
<div style="left:749.3px;top:989.1px;width:2.2px;height:11.599999999999909px;background:#c9d0e4;"></div>
<div style="left:744.7px;top:989.1px;width:10.3px;height:1.4px;background:#c6c6c6;"></div>
<div style="left:744.7px;top:999.5px;width:10.3px;height:1.4px;background:#c6c6c6;"></div>
<div style="left:749.3px;top:1012.52px;width:2.2px;height:11.599999999999909px;background:#c9d0e4;"></div>
<div style="left:744.7px;top:1012.52px;width:10.3px;height:1.4px;background:#c6c6c6;"></div>
<div style="left:744.7px;top:1022.92px;width:10.3px;height:1.4px;background:#c6c6c6;"></div>
<div style="left:749.3px;top:1035.94px;width:2.2px;height:11.599999999999909px;background:#c9d0e4;"></div>
<div style="left:744.7px;top:1035.94px;width:10.3px;height:1.4px;background:#c6c6c6;"></div>
<div style="left:744.7px;top:1046.34px;width:10.3px;height:1.4px;background:#c6c6c6;"></div>
<div style="left:748.6px;top:838px;width:2.3px;height:214px;background:#a4bdec;"></div>
<svg style="left:742.2px;top:825.6px" width="15.2" height="18.6" viewBox="0 0 15.2 18.6"><path d="M2.600 0h10a2.600 2.600 0 0 1 2.300 3.800L7.600 18.600 0.300 3.800A2.600 2.600 0 0 1 2.600 0z" fill="#559bf2"/></svg>
<div style="left:1588.6px;top:915.9px;width:12.6px;height:23.5px;background:#4a4a4a;border-radius:6px;"></div>
<div style="left:1574px;top:872.6px;width:34px;height:1.1px;background:#101010;"></div>
<div style="left:6.7px;top:39.8px;width:4.6px;height:27px;background:repeating-linear-gradient(#6a6a6a 0,#6a6a6a 1.3px,transparent 1.3px,transparent 2.7px);"></div>
<svg style="left:21.7px;top:43.7px;" width="22.5" height="20" viewBox="0 0 22.5 20"><path d="M11.25 0L0 10.3l1.2 1.4L3.300 10.300V20h6.200v-6.600h3.500V20h6.200v-9.700l2.100 1.400 1.200 -1.400z" fill="#c4c4c4"/></svg>
<div style="left:60px;top:36.5px;width:33.7px;height:33.8px;background:#2e6fe2;border-radius:6px;"></div>
<svg style="left:60px;top:36.5px;" width="33.7" height="33.8" viewBox="0 0 33.7 33.8"><path d="M9.7 5.8V30l6.100 -6.700 10.900 -1.600z" fill="#fff"/></svg>
<svg style="left:100px;top:42.7px;" width="21.7" height="21.3" viewBox="0 0 21.7 21.3"><g fill="#c4c4c4"><rect x="4.300" y="1.800" width="3.500" height="11" rx="1.750" transform="rotate(-12 6 8)"/><rect x="8.300" y="0" width="3.500" height="12" rx="1.750"/><rect x="12.400" y="0.800" width="3.500" height="12" rx="1.750" transform="rotate(10 14 7)"/><rect x="16.400" y="4" width="3.300" height="10" rx="1.650" transform="rotate(24 18 9)"/><path d="M0.300 10.300q2 -1.400 3.600 .7l2.200 3V8.500h12.400l-1 7.500q-1 5.300 -5.500 5.300h-3.300q-3 0 -4.700 -3z"/></g></svg>
<svg style="left:133.5px;top:42px;" width="25" height="24" viewBox="0 0 25 24"><circle cx="9.500" cy="8.900" r="7.300" stroke="#c4c4c4" stroke-width="2.100" fill="none"/><path d="M14.800 14.500l7.300 6.800" stroke="#c4c4c4" stroke-width="3" stroke-linecap="round"/></svg>
<svg style="left:178.3px;top:44.8px;" width="22.5" height="16.7" viewBox="0 0 22.5 16.7"><circle cx="12.400" cy="5.400" r="4.400" fill="#7e7e7e"/><path d="M8 4.600Q2.600 4.200 1.900 8Q1.800 10.500 5.500 11.800M12.500 14.800Q19.500 15.300 20.800 11.600Q21.500 8.800 17.300 7.600" stroke="#7e7e7e" stroke-width="2.400" fill="none"/><path d="M4.300 9l7.300 4.300 -7.600 3.400z" fill="#7e7e7e"/></svg>
<svg style="left:199px;top:63.6px;" width="4.8" height="4.2" viewBox="0 0 4.8 4.2"><path d="M4.8 0V4.2H0z" fill="#8a8a8a"/></svg>
<svg style="left:214px;top:44.3px;" width="19" height="19" viewBox="0 0 19 19"><path d="M9.500 0l3.700 4.500h-2.200v3.500h3.500V5.800L19 9.500l-4.500 3.700v-2.200h-3.500v3.500h2.200L9.500 19l-3.700 -4.500h2.200v-3.500H4.500v2.200L0 9.500l4.500 -3.700v2.200h3.500V4.500H5.800z" fill="#7e7e7e"/></svg>
<svg style="left:233.3px;top:63.6px;" width="4.8" height="4.2" viewBox="0 0 4.8 4.2"><path d="M4.8 0V4.2H0z" fill="#8a8a8a"/></svg>
<svg style="left:252.5px;top:44.3px;" width="11.6" height="19" viewBox="0 0 11.6 19"><path d="M5.800 0l3.200 4.400H7.100v7.600h4.500L5.800 19 0 12h4.500V4.400H2.600z" fill="#7e7e7e"/></svg>
<svg style="left:267.5px;top:63.6px;" width="4.8" height="4.2" viewBox="0 0 4.8 4.2"><path d="M4.8 0V4.2H0z" fill="#8a8a8a"/></svg>
<svg style="left:290.8px;top:42.3px;" width="23.4" height="22.6" viewBox="0 0 23.4 22.6"><path d="M6.500 4.200Q14 0.500 19.300 5.200Q22.800 9 21.800 13.600" stroke="#c4c4c4" stroke-width="2" fill="none"/><path d="M0.800 5.600l7.400 -4.600 .6 7.700z" fill="#c4c4c4"/><path d="M2.200 13.500A9.500 9.500 0 0 0 20.600 16.500" stroke="#c4c4c4" stroke-width="2" stroke-dasharray="1.300 2.100" fill="none"/></svg>
<svg style="left:325.3px;top:44px;" width="23" height="19.7" viewBox="0 0 23 19.7"><rect x="0.800" y="0.800" width="21.400" height="18.100" stroke="#c4c4c4" stroke-width="1.500" stroke-dasharray="4 2.600" fill="none"/><path d="M11.500 2.800l2.600 2.800H8.900zM11.500 16.900l2.600 -2.800H8.900zM3 9.850l3.400 -2.800v5.600zM20 9.850l-3.400 -2.800v5.600z" fill="#c4c4c4"/><path d="M2.700 7v5.700M20.300 7v5.700" stroke="#c4c4c4" stroke-width="1.200"/></svg>
<div style="left:371.1px;top:45.6px;width:19.2px;height:16px;background:#434343;box-shadow:0 0 0 1.5px #c4c4c4;"></div>
<svg style="left:390px;top:63.6px;" width="4.8" height="4.2" viewBox="0 0 4.8 4.2"><path d="M4.8 0V4.2H0z" fill="#c4c4c4"/></svg>
<svg style="left:405.3px;top:41.5px;" width="21" height="23.8" viewBox="0 0 21 23.8"><path d="M10.500 1L20 6v11.500L10.500 22.800 1 17.500V6zM1 6l9.500 5.300L20 6M10.500 11.300v11.500" stroke="#c4c4c4" stroke-width="1.900" fill="none" stroke-linejoin="round"/></svg>
<svg style="left:424px;top:63.6px;" width="4.8" height="4.2" viewBox="0 0 4.8 4.2"><path d="M4.8 0V4.2H0z" fill="#c4c4c4"/></svg>
<svg style="left:438px;top:42.7px;" width="22.3" height="22.1" viewBox="0 0 22.3 22.1"><path d="M14.500 0l7.800 5.800 -3.300 4.600 -7.800 -5.800zM10.300 5.800l7.600 5.700 -2.900 6.200 -13.500 4.400 7.200 -9.200a1.700 1.700 0 1 0 -1.300 -1L.2 21 1 7.500z" fill="#c4c4c4"/></svg>
<svg style="left:459.2px;top:63.6px;" width="4.8" height="4.2" viewBox="0 0 4.8 4.2"><path d="M4.8 0V4.2H0z" fill="#c4c4c4"/></svg>
<svg style="left:473.7px;top:44px;" width="20.5" height="19.2" viewBox="0 0 20.5 19.2"><path d="M0 0h20.500v5.500h-1.800l-.5 -2.900h-6v13.800l2.700 .600v2.200H5.600V17l2.700 -.600V2.600h-6l-.5 2.900H0z" fill="#c4c4c4"/></svg>
<svg style="left:493.3px;top:63.6px;" width="4.8" height="4.2" viewBox="0 0 4.8 4.2"><path d="M4.8 0V4.2H0z" fill="#c4c4c4"/></svg>
<svg style="left:516.3px;top:42px;" width="23.4" height="22.8" viewBox="0 0 23.4 22.8"><path d="M22 0q2.200 1 .8 3.200L12.500 15.500 8.800 12.600 19.500 .800Q20.800 -.400 22 0zM7.600 13.800l3.700 2.900q.8 3.300 -2.600 5.100Q5 23.500 0 22.300q3.300 -1.600 3.600 -4.300Q4 14.200 7.600 13.800z" fill="#c4c4c4"/></svg>
<svg style="left:551.3px;top:42.7px;" width="22" height="21" viewBox="0 0 22 21"><path d="M11 0a3.600 3.600 0 0 1 2.400 6.300L14.500 12H20q2 0 2 2v2.600H0V14q0 -2 2 -2h5.500L8.600 6.300A3.600 3.600 0 0 1 11 0zM1 18.600h20v2H1z" fill="#c4c4c4"/></svg>
<svg style="left:585px;top:42px;" width="23.3" height="22.8" viewBox="0 0 23.3 22.8"><path d="M14.300 0.300l8.700 8.200 -8.200 8.700 -8.700 -8.200zM5 9.900l8.800 8.300 -3.800 4q-1 .8 -2 0L1 15.800q-.8 -1 0 -2z" fill="#c4c4c4"/><path d="M5.500 11.900l6.300 6 -2.200 2.300q-.6 .5 -1.200 0l-5.100 -4.800q-.5 -.6 0 -1.200z" fill="#1e1e1e"/></svg>
<svg style="left:627.5px;top:40.7px;" width="27.5" height="23.3" viewBox="0 0 27.5 23.3"><circle cx="6.600" cy="3.800" r="2.500" fill="#c4c4c4"/><path d="M2 9.500Q4.500 7.500 8.200 8l1.800 4.200 2.700 1 -.6 1.700 -3.600 -1.100 -1.200 -1.700 -.7 3.200 2.200 3.200 .4 4.300H7.300l-.4 -3.800 -2.100 -2.300 -1 6.200H1.900l1.300 -9.300 .5 -3 -1.800 1.400 -.7 3H0l.6 -4z" fill="#c4c4c4"/><path d="M26.200 0.300q1.600 1 .6 2.800L19.800 13.500l-3 -2.200L24.300 1Q25.200 -.200 26.200 .300zM16 12.300l3 2.200q.5 3 -2.500 4.200Q14 19.800 10.300 18.600q2.200 -1 2.700 -3.100Q13.500 12.500 16 12.300z" fill="#c4c4c4"/></svg>
<svg style="left:650px;top:63.6px;" width="4.8" height="4.2" viewBox="0 0 4.8 4.2"><path d="M4.8 0V4.2H0z" fill="#c4c4c4"/></svg>
<svg style="left:672px;top:42px;" width="20.5" height="21" viewBox="0 0 20.5 21"><path d="M12 0l8.500 8.500 -2.300 .9 -2.100 -.5 -3.300 3.400 .5 4.200 -1.700 1.700 -4.700 -4.700L1.600 19.300 0 20.700l1.500 -1.800 5.700 -5.500L2.500 8.700 4.200 7l4.200 .5 3.400 -3.300 -.5 -2.100z" fill="#c4c4c4"/><path d="M0 21l1 -2.800 5.500 -5.300 1.500 1.500 -5.400 5.400z" fill="#c4c4c4"/></svg>
<svg style="left:694px;top:63.6px;" width="4.8" height="4.2" viewBox="0 0 4.8 4.2"><path d="M4.8 0V4.2H0z" fill="#c4c4c4"/></svg>
<div style="left:763.3px;top:37.3px;width:31.7px;height:32.5px;background:#333333;border-radius:6px;"></div>
<svg style="left:768.5px;top:44.5px;" width="21" height="18" viewBox="0 0 21 18"><path d="M10.500 9.500V3M10.500 9.500L3 15M10.500 9.500L18 15" stroke="#7e7e7e" stroke-width="1.500" fill="none"/><path d="M10.500 0l2.700 3.800H7.800zM0.500 17l1 -4.400 3.100 3.900zM20.500 17l-1 -4.400 -3.100 3.900z" fill="#7e7e7e"/></svg>
<svg style="left:805px;top:44.5px;" width="19.5" height="18.5" viewBox="0 0 19.5 18.5"><circle cx="9.700" cy="10.500" r="2.700" stroke="#7e7e7e" stroke-width="1.400" fill="none"/><path d="M9.700 7.500V3.500M7.300 12L3 15.300M12.100 12L16.500 15.300" stroke="#7e7e7e" stroke-width="1.500" fill="none"/><path d="M9.700 0l2.700 3.800H7zM0 17.500l1 -4.400 3.100 3.900zM19.500 17.500l-1 -4.400 -3.100 3.900z" fill="#7e7e7e"/></svg>
<svg style="left:842px;top:44.8px;" width="17" height="17" viewBox="0 0 17 17"><path d="M3 8.500L14.500 4v9L3 16.500zM6.500 6.500l7 8.500" stroke="#7e7e7e" stroke-width="1.500" fill="none"/><path d="M0 0l4.400 1.200L1.200 4.400z" fill="#7e7e7e"/><path d="M1.500 1.500L7 7" stroke="#7e7e7e" stroke-width="1.400"/></svg>
<div style="left:888.8px;top:47.2px;width:11.9px;height:11.9px;background:#0c0c0c;border-radius:1px;box-shadow:0 0 0 2.200px #cacaca;"></div>
<svg style="left:1008px;top:45.3px;" width="15.8" height="16.7" viewBox="0 0 15.8 16.7"><path d="M1 15.500l6 -5.600 6 5.600" stroke="#c4c4c4" stroke-width="1.600" fill="none"/><path d="M15.800 0v5.200L10.600 0z" fill="#c4c4c4"/><path d="M12.500 3.300L7.500 8.300" stroke="#c4c4c4" stroke-width="1.400" stroke-dasharray="2 1.300"/></svg>
<div style="left:1035px;top:37px;width:32.5px;height:32.8px;background:#4b4b4b;border-radius:6px;"></div>
<svg style="left:1043.3px;top:45.6px;" width="16" height="15.6" viewBox="0 0 16 15.6"><path d="M0.800 4.800V0.800H4.800M11.200 0.800h4v4M15.200 10.800v4h-4M4.800 14.800H0.800v-4" stroke="#c4c4c4" stroke-width="1.600" fill="none"/><path d="M5 6V4.800h1.500M9.500 4.800H11V6M11 9.600v1.200H9.500M6.500 10.800H5V9.600" stroke="#c4c4c4" stroke-width="1.300" fill="none"/></svg>
<svg style="left:1380px;top:44px;" width="19.2" height="19.2" viewBox="0 0 19.2 19.2"><circle cx="9.600" cy="9.600" r="9.600" fill="#c4c4c4"/><path d="M7 4.600l6.700 5 -6.700 5z" fill="#1e1e1e"/></svg>
<svg style="left:1428.7px;top:44.8px;" width="17.6" height="17.5" viewBox="0 0 17.6 17.5"><path d="M0 1.500h6.200l1.600 2.200h9.800V17.500H0z" fill="#c4c4c4"/><path d="M8.500 0.500h9" stroke="#c4c4c4" stroke-width="1.300"/><path d="M7.500 7.500l-3.500 3.500 3.500 3.500zM10.300 7.500l3.500 3.500 -3.500 3.500z" fill="#1e1e1e"/></svg>
<div style="left:1465.8px;top:45.3px;width:17.2px;height:16.7px;background:#c4c4c4;border-radius:3px;"></div>
<svg style="left:1465.8px;top:45.3px;" width="17.2" height="16.7" viewBox="0 0 17.2 16.7"><path d="M3.800 8.600l3.300 3.400 6.400 -7.400" stroke="#1e1e1e" stroke-width="2.200" fill="none"/></svg>
<svg style="left:1752px;top:49.7px;" width="11.7" height="9.6" viewBox="0 0 11.7 9.6"><path d="M0 1h11.7M0 4.8h11.7M0 8.6h11.7" stroke="#dcdcdc" stroke-width="1.6" fill="none"/></svg>
<svg style="left:1877.3px;top:49px;" width="13.7" height="10" viewBox="0 0 13.7 10"><path d="M1 1l4.6 4.0l-4.600 4.0M7.449999999999999 1l4.6 4.0l-4.600 4.0" stroke="#dcdcdc" stroke-width="1.9" fill="none"/></svg>
<svg style="left:17.0px;top:98.8px;" width="7" height="7" viewBox="0 0 7 7"><path d="M0.5 0.5L6.5 6.5M6.5 0.5L0.5 6.5" stroke="#c4c4c4" stroke-width="1.3" fill="none"/></svg>
<svg style="left:66px;top:91px;" width="12" height="14.2" viewBox="0 0 12 14.2"><path d="M2.6 7V3.6a2.800 2.800 0 0 1 5.600 -0.600" stroke="#c4c4c4" stroke-width="1.7" fill="none"/><rect x="1.600" y="6.6" width="10" height="7.4" rx="0.8" fill="#c4c4c4"/><rect x="5.8" y="9" width="1.800" height="2.800" fill="#1e1e1e"/></svg>
<svg style="left:395.8px;top:96.3px;" width="11.5" height="10" viewBox="0 0 11.5 10"><path d="M0 1h11.5M0 5.0h11.5M0 9h11.5" stroke="#c4c4c4" stroke-width="1.6" fill="none"/></svg>
<svg style="left:418.8px;top:95.5px;" width="13.7" height="10" viewBox="0 0 13.7 10"><path d="M1 1l4.6 4.0l-4.600 4.0M7.449999999999999 1l4.6 4.0l-4.600 4.0" stroke="#c4c4c4" stroke-width="1.9" fill="none"/></svg>
<svg style="left:462.3px;top:98.8px;" width="7" height="7" viewBox="0 0 7 7"><path d="M0.5 0.5L6.5 6.5M6.5 0.5L0.5 6.5" stroke="#c4c4c4" stroke-width="1.3" fill="none"/></svg>
<svg style="left:511.5px;top:91px;" width="12" height="14.2" viewBox="0 0 12 14.2"><path d="M2.6 7V3.6a2.800 2.800 0 0 1 5.600 -0.600" stroke="#c4c4c4" stroke-width="1.7" fill="none"/><rect x="1.600" y="6.6" width="10" height="7.4" rx="0.8" fill="#c4c4c4"/><rect x="5.8" y="9" width="1.800" height="2.800" fill="#1e1e1e"/></svg>
<svg style="left:681.3px;top:96.3px;" width="11.5" height="10" viewBox="0 0 11.5 10"><path d="M0 1h11.5M0 5.0h11.5M0 9h11.5" stroke="#c4c4c4" stroke-width="1.6" fill="none"/></svg>
<svg style="left:555px;top:139.5px;" width="7.6" height="11" viewBox="0 0 7.6 11"><path d="M6.600 1L1.400 5.500l5.200 4.500" stroke="#c4c4c4" stroke-width="1.900" fill="none"/></svg>
<svg style="left:562.5px;top:739.8px;" width="13" height="8" viewBox="0 0 13 8"><path d="M1 1L6.5 6.8L12 1" stroke="#e6e6e6" stroke-width="2.2" fill="none" stroke-linejoin="miter"/></svg>
<svg style="left:707.4px;top:739.8px;" width="14.8" height="8.6" viewBox="0 0 14.8 8.6"><path d="M1 1L7.4 7.3999999999999995L13.8 1" stroke="#e6e6e6" stroke-width="2.2" fill="none" stroke-linejoin="miter"/></svg>
<svg style="left:762.5px;top:733.7px;" width="20.5" height="18.6" viewBox="0 0 20.5 18.6"><rect x="0.800" y="0.800" width="17.500" height="13.500" stroke="#c4c4c4" stroke-width="1.500" fill="none"/><path d="M11.300 2.600L6.300 8.300h3.200L8 12.800l5 -5.800H9.800z" fill="#c4c4c4"/><path d="M15.500 15l2.500 3.300 2.500 -3.300z" fill="#c4c4c4"/></svg>
<svg style="left:795.2px;top:735.5px;" width="20.1" height="15.5" viewBox="0 0 20.1 15.5"><rect x="0.700" y="0.700" width="18.700" height="14.100" stroke="#c4c4c4" stroke-width="1.400" fill="#2a2a2a"/><path d="M2.500 2.500h3.800v3.500H2.500zM10 2.500h3.800v3.500H10zM6.300 6h3.700v3.500H6.300zM13.800 6h3.700v3.500h-3.700zM2.500 9.500h3.800V13H2.500zM10 9.500h3.800V13H10z" fill="#c4c4c4"/></svg>
<svg style="left:828px;top:733.5px;" width="21" height="19" viewBox="0 0 21 19"><path d="M4 16.500L6.500 4.500Q12 2.500 16.500 2.500L18.500 16.500z" stroke="#c4c4c4" stroke-width="1.500" fill="none"/><g fill="#c4c4c4"><rect x="2.300" y="14.800" width="3.400" height="3.400"/><rect x="16.800" y="14.800" width="3.400" height="3.400"/><rect x="4.800" y="2.800" width="3.400" height="3.400"/><rect x="14.800" y="0.800" width="3.400" height="3.400"/></g></svg>
<svg style="left:861px;top:735.5px;" width="21" height="16" viewBox="0 0 21 16"><rect x="0.800" y="0.800" width="19.400" height="14.400" stroke="#c4c4c4" stroke-width="1.500" fill="none"/><rect x="4.500" y="4.200" width="12" height="7.600" fill="#c4c4c4"/></svg>
<svg style="left:892.4px;top:732.7px;" width="22.4" height="21.5" viewBox="0 0 22.4 21.5"><rect x="3" y="3.500" width="16.400" height="12" stroke="#c4c4c4" stroke-width="1.500" fill="none"/><path d="M11.200 0v6.500M11.200 12.500V19M0 9.500h6M16.400 9.500h6" stroke="#c4c4c4" stroke-width="1.400"/><path d="M15.300 18l2.500 3.300 2.500 -3.300z" fill="#c4c4c4"/></svg>
<svg style="left:946.8px;top:734px;" width="19" height="21" viewBox="0 0 19 21"><circle cx="9.100" cy="4.700" r="4.300" fill="#e5483c"/><circle cx="4.800" cy="10.300" r="4.300" fill="#3ec24a"/><circle cx="13.400" cy="10.300" r="4.300" fill="#4079ec"/><path d="M11.500 16.200l3.600 4.200 3.600 -4.200z" fill="#c4c4c4"/></svg>
<svg style="left:980.9px;top:734.8px;" width="17.2" height="17.2" viewBox="0 0 17.2 17.2"><circle cx="8.600" cy="8.600" r="8.400" fill="#c4c4c4"/><path d="M11.55 9.12L9.35 17.17M9.63 11.42L1.56 13.53M6.67 10.90L0.81 4.97M5.65 8.08L7.85 0.03M7.57 5.78L15.64 3.67M10.53 6.30L16.39 12.23" stroke="#1e1e1e" stroke-width="1.300" fill="none"/><polygon points="11.55,9.12 9.63,11.42 6.67,10.90 5.65,8.08 7.57,5.78 10.53,6.30" fill="#1e1e1e"/></svg>
<svg style="left:1083.6px;top:736px;" width="20.6" height="16.5" viewBox="0 0 20.6 16.5"><path d="M6.500 2l1.500 -2h4.600l1.500 2h4.500q2 0 2 2v10.500q0 2 -2 2H2q-2 0 -2 -2V4q0 -2 2 -2z" fill="#c4c4c4"/><circle cx="10.300" cy="9" r="4.300" fill="#1e1e1e"/><circle cx="10.300" cy="9" r="2.600" fill="#c4c4c4"/></svg>
<svg style="left:1116.3px;top:734px;" width="21.5" height="19.5" viewBox="0 0 21.5 19.5"><path d="M0 12Q9 2.500 18 12Q9 21.500 0 12z" fill="#7e7e7e"/><circle cx="9" cy="12" r="3.400" fill="#1e1e1e"/><circle cx="9" cy="12" r="1.700" fill="#7e7e7e"/><path d="M11.500 2l1 -1.500h4l1 1.500h2.500q1.500 0 1.500 1.500v5q0 1.500 -1.500 1.500h-2l-3 -3 -4 -1.500V3.500q0 -1.500 1.500 -1.500z" fill="#7e7e7e"/><circle cx="15.800" cy="5.800" r="2" fill="#1e1e1e"/></svg>
<svg style="left:1697px;top:96.3px;" width="11.5" height="10" viewBox="0 0 11.5 10"><path d="M0 1h11.5M0 5.0h11.5M0 9h11.5" stroke="#c4c4c4" stroke-width="1.6" fill="none"/></svg>
<svg style="left:1677.9px;top:129px;" width="17" height="12.8" viewBox="0 0 17 12.8"><path d="M0 0h2.300v12.800H0zM17.0 0l-12.5 6.4l12.5 6.4z" fill="#c4c4c4"/></svg>
<svg style="left:1709px;top:129px;" width="17.5" height="12.8" viewBox="0 0 17.5 12.8"><path d="M12.5 0l-12.5 6.4l12.5 6.4zM15 0h2.500v12.800H15z" fill="#c4c4c4"/></svg>
<svg style="left:1745.2px;top:129px;" width="13.5" height="12.8" viewBox="0 0 13.5 12.8"><path d="M0 0l13.5 6.4l-13.5 6.4z" fill="#c4c4c4"/></svg>
<svg style="left:1777px;top:129px;" width="17" height="12.8" viewBox="0 0 17 12.8"><path d="M0 0h2.500v12.800H0zM5 0l12 6.4l-12 6.4z" fill="#c4c4c4"/></svg>
<svg style="left:1810px;top:129px;" width="17" height="12.8" viewBox="0 0 17 12.8"><path d="M0 0l12.5 6.4l-12.5 6.4zM14.700 0H17v12.800h-2.300z" fill="#c4c4c4"/></svg>
<svg style="left:1828px;top:198.3px;" width="13.7" height="8.2" viewBox="0 0 13.7 8.2"><path d="M1 1L6.85 6.999999999999999L12.7 1" stroke="#e6e6e6" stroke-width="2.2" fill="none" stroke-linejoin="miter"/></svg>
<svg style="left:1865px;top:194.2px;" width="18.5" height="16.5" viewBox="0 0 18.5 16.5"><path d="M5 7.500A6.500 6.500 0 1 1 11 13.700" stroke="#c4c4c4" stroke-width="1.800" fill="none"/><path d="M0.500 6.500h9L5 12z" fill="#c4c4c4"/><path d="M1 15.700h16.500" stroke="#c4c4c4" stroke-width="1.500"/></svg>
<svg style="left:1757.3px;top:228.8px;" width="20.2" height="13" viewBox="0 0 20.2 13"><path d="M0 6.5Q10.1 -5.8500000000000005 20.2 6.5Q10.1 18.849999999999998 0 6.5z" fill="#e4e4e4"/><circle cx="10.1" cy="6.5" r="4.16" fill="#4b4b4b"/><circle cx="10.1" cy="6.5" r="2.145" fill="#e4e4e4"/></svg>
<svg style="left:1787.8px;top:226px;" width="26" height="18.6" viewBox="0 0 26 18.6"><path d="M0 5.500h4.500L11 0v18.600L4.500 13H0z" fill="#e4e4e4"/><path d="M14 5.300q2.300 4 0 8M17.500 3.300q3.800 6 0 12M21 1.300q5.200 8 0 16" stroke="#e4e4e4" stroke-width="1.500" fill="none"/></svg>
<svg style="left:1824px;top:225.2px;" width="19.2" height="19.6" viewBox="0 0 19.2 19.6"><rect x="2.200" y="2.200" width="14.800" height="15.200" stroke="#c4c4c4" stroke-width="1.400" fill="none" stroke-dasharray="0"/><g fill="#c4c4c4"><rect x="0" y="0" width="3.600" height="3.600"/><rect x="15.600" y="0" width="3.600" height="3.600"/><rect x="0" y="16" width="3.600" height="3.600"/><rect x="15.600" y="16" width="3.600" height="3.600"/><circle cx="9.600" cy="9.800" r="1.500"/></g></svg>
<svg style="left:1865px;top:227.3px;" width="19" height="15" viewBox="0 0 19 15"><path d="M1 6.500v7.500h17V6.500" stroke="#c4c4c4" stroke-width="2" fill="none"/><path d="M5 8Q5.500 3 11 3V0l6 4.500 -6 4.500V6Q7 6 5 8z" fill="#c4c4c4"/></svg>
<div style="left:1624px;top:261.9px;width:11.7px;height:11.5px;background:#0c0c0c;border-radius:1px;box-shadow:0 0 0 2px #cacaca;"></div>
<svg style="left:1870.2px;top:302.4px;" width="11.5" height="10" viewBox="0 0 11.5 10"><path d="M0 1h11.5M0 5.0h11.5M0 9h11.5" stroke="#c4c4c4" stroke-width="1.6" fill="none"/></svg>
<svg style="left:1646px;top:354.4px;" width="16" height="18.6" viewBox="0 0 16 18.6"><circle cx="8" cy="10.6" r="6.6" stroke="#c4c4c4" stroke-width="1.5" fill="none"/><path d="M5.4 1.2h5.200M8 1.2v3" stroke="#c4c4c4" stroke-width="1.5" fill="none"/></svg>
<svg style="left:1646px;top:381.9px;" width="16" height="18.6" viewBox="0 0 16 18.6"><circle cx="8" cy="10.6" r="6.6" stroke="#c4c4c4" stroke-width="1.5" fill="none"/><path d="M5.4 1.2h5.200M8 1.2v3" stroke="#c4c4c4" stroke-width="1.5" fill="none"/></svg>
<svg style="left:1646px;top:409.7px;" width="16" height="18.6" viewBox="0 0 16 18.6"><circle cx="8" cy="10.6" r="6.6" stroke="#c4c4c4" stroke-width="1.5" fill="none"/><path d="M5.4 1.2h5.200M8 1.2v3" stroke="#c4c4c4" stroke-width="1.5" fill="none"/></svg>
<svg style="left:1646px;top:437.2px;" width="16" height="18.6" viewBox="0 0 16 18.6"><circle cx="8" cy="10.6" r="6.6" stroke="#c4c4c4" stroke-width="1.5" fill="none"/><path d="M5.4 1.2h5.200M8 1.2v3" stroke="#c4c4c4" stroke-width="1.5" fill="none"/></svg>
<svg style="left:1646px;top:464.79999999999995px;" width="16" height="18.6" viewBox="0 0 16 18.6"><circle cx="8" cy="10.6" r="6.6" stroke="#c4c4c4" stroke-width="1.5" fill="none"/><path d="M5.4 1.2h5.200M8 1.2v3" stroke="#c4c4c4" stroke-width="1.5" fill="none"/></svg>
<svg style="left:1753.5px;top:414.5px;" width="13" height="8" viewBox="0 0 13 8"><path d="M4 1.200a2.800 2.800 0 0 0 0 5.600h2M9 1.200a2.800 2.800 0 0 1 0 5.600H7M4 4h5" stroke="#5a8fe6" stroke-width="1.500" fill="none"/></svg>
<svg style="left:1637.6px;top:549.5px;" width="14.5" height="9.8" viewBox="0 0 14.5 9.8"><path d="M0 4.9Q7.25 -4.41 14.5 4.9Q7.25 14.21 0 4.9z" fill="#cfcfcf"/><circle cx="7.25" cy="4.9" r="3.136" fill="#0f0f0f"/><circle cx="7.25" cy="4.9" r="1.6170000000000002" fill="#cfcfcf"/></svg>
<svg style="left:1637.6px;top:577.2px;" width="14.5" height="9.8" viewBox="0 0 14.5 9.8"><path d="M0 4.9Q7.25 -4.41 14.5 4.9Q7.25 14.21 0 4.9z" fill="#cfcfcf"/><circle cx="7.25" cy="4.9" r="3.136" fill="#0f0f0f"/><circle cx="7.25" cy="4.9" r="1.6170000000000002" fill="#cfcfcf"/></svg>
<svg style="left:1637.6px;top:604.5px;" width="14.5" height="9.8" viewBox="0 0 14.5 9.8"><path d="M0 4.9Q7.25 -4.41 14.5 4.9Q7.25 14.21 0 4.9z" fill="#cfcfcf"/><circle cx="7.25" cy="4.9" r="3.136" fill="#0f0f0f"/><circle cx="7.25" cy="4.9" r="1.6170000000000002" fill="#cfcfcf"/></svg>
<svg style="left:1637.6px;top:632.3000000000001px;" width="14.5" height="9.8" viewBox="0 0 14.5 9.8"><path d="M0 4.9Q7.25 -4.41 14.5 4.9Q7.25 14.21 0 4.9z" fill="#cfcfcf"/><circle cx="7.25" cy="4.9" r="3.136" fill="#0f0f0f"/><circle cx="7.25" cy="4.9" r="1.6170000000000002" fill="#cfcfcf"/></svg>
<svg style="left:1637.6px;top:659.5px;" width="14.5" height="9.8" viewBox="0 0 14.5 9.8"><path d="M0 4.9Q7.25 -4.41 14.5 4.9Q7.25 14.21 0 4.9z" fill="#cfcfcf"/><circle cx="7.25" cy="4.9" r="3.136" fill="#0f0f0f"/><circle cx="7.25" cy="4.9" r="1.6170000000000002" fill="#cfcfcf"/></svg>
<svg style="left:1637.6px;top:687.0px;" width="14.5" height="9.8" viewBox="0 0 14.5 9.8"><path d="M0 4.9Q7.25 -4.41 14.5 4.9Q7.25 14.21 0 4.9z" fill="#cfcfcf"/><circle cx="7.25" cy="4.9" r="3.136" fill="#0f0f0f"/><circle cx="7.25" cy="4.9" r="1.6170000000000002" fill="#cfcfcf"/></svg>
<svg style="left:1637.6px;top:714.5px;" width="14.5" height="9.8" viewBox="0 0 14.5 9.8"><path d="M0 4.9Q7.25 -4.41 14.5 4.9Q7.25 14.21 0 4.9z" fill="#cfcfcf"/><circle cx="7.25" cy="4.9" r="3.136" fill="#0f0f0f"/><circle cx="7.25" cy="4.9" r="1.6170000000000002" fill="#cfcfcf"/></svg>
<svg style="left:1669.2px;top:547.3px;" width="15.6" height="15.6" viewBox="0 0 15.6 15.6"><polygon points="7.80,0.60 9.86,5.56 15.22,5.99 11.14,9.48 12.38,14.71 7.80,11.91 3.22,14.71 4.46,9.48 0.38,5.99 5.74,5.56" fill="#5e5e5e"/></svg>
<svg style="left:1702.3px;top:574.2px;" width="16.2" height="16.2" viewBox="0 0 16.2 16.2"><polygon points="8.10,0.60 10.24,5.75 15.80,6.20 11.57,9.83 12.86,15.25 8.10,12.34 3.34,15.25 4.63,9.83 0.40,6.20 5.96,5.75" fill="#cfcfcf"/></svg>
<svg style="left:1702.3px;top:601.5px;" width="16.2" height="16.2" viewBox="0 0 16.2 16.2"><polygon points="8.10,0.60 10.24,5.75 15.80,6.20 11.57,9.83 12.86,15.25 8.10,12.34 3.34,15.25 4.63,9.83 0.40,6.20 5.96,5.75" fill="#cfcfcf"/></svg>
<svg style="left:1702.3px;top:629.3000000000001px;" width="16.2" height="16.2" viewBox="0 0 16.2 16.2"><polygon points="8.10,0.60 10.24,5.75 15.80,6.20 11.57,9.83 12.86,15.25 8.10,12.34 3.34,15.25 4.63,9.83 0.40,6.20 5.96,5.75" fill="#cfcfcf"/></svg>
<svg style="left:1702.3px;top:656.5px;" width="16.2" height="16.2" viewBox="0 0 16.2 16.2"><polygon points="8.10,0.60 10.24,5.75 15.80,6.20 11.57,9.83 12.86,15.25 8.10,12.34 3.34,15.25 4.63,9.83 0.40,6.20 5.96,5.75" fill="#cfcfcf"/></svg>
<svg style="left:1702.3px;top:684.0px;" width="16.2" height="16.2" viewBox="0 0 16.2 16.2"><polygon points="8.10,0.60 10.24,5.75 15.80,6.20 11.57,9.83 12.86,15.25 8.10,12.34 3.34,15.25 4.63,9.83 0.40,6.20 5.96,5.75" fill="#cfcfcf"/></svg>
<svg style="left:1702.3px;top:711.5px;" width="16.2" height="16.2" viewBox="0 0 16.2 16.2"><polygon points="8.10,0.60 10.24,5.75 15.80,6.20 11.57,9.83 12.86,15.25 8.10,12.34 3.34,15.25 4.63,9.83 0.40,6.20 5.96,5.75" fill="#cfcfcf"/></svg>
<svg style="left:1870.6px;top:862px;" width="11.5" height="10" viewBox="0 0 11.5 10"><path d="M0 1h11.5M0 5.0h11.5M0 9h11.5" stroke="#c4c4c4" stroke-width="1.6" fill="none"/></svg>
<svg style="left:1631px;top:893.5px;" width="22" height="13" viewBox="0 0 22 13"><circle cx="5.400" cy="5.400" r="4.500" stroke="#c4c4c4" stroke-width="1.400" fill="none"/><path d="M8.600 8.600l4 4" stroke="#c4c4c4" stroke-width="1.600"/><path d="M14.500 7l3 3 3 -3" stroke="#c4c4c4" stroke-width="1.400" fill="none"/></svg>
<svg style="left:1867.8px;top:893.8px;" width="11" height="11" viewBox="0 0 11 11"><path d="M0.5 0.5L10.5 10.5M10.5 0.5L0.5 10.5" stroke="#e0e0e0" stroke-width="1.9" fill="none"/></svg>
<svg style="left:1622.2px;top:923.5px;" width="12" height="7.6" viewBox="0 0 12 7.6"><path d="M1 1L6.0 6.3999999999999995L11 1" stroke="#d0d0d0" stroke-width="2.3" fill="none" stroke-linejoin="miter"/></svg>
<svg style="left:1645.8px;top:947.2px;" width="12" height="7.6" viewBox="0 0 12 7.6"><path d="M1 1L6.0 6.3999999999999995L11 1" stroke="#d0d0d0" stroke-width="2.3" fill="none" stroke-linejoin="miter"/></svg>
<svg style="left:1622.2px;top:993.7px;" width="12" height="7.6" viewBox="0 0 12 7.6"><path d="M1 1L6.0 6.3999999999999995L11 1" stroke="#d0d0d0" stroke-width="2.3" fill="none" stroke-linejoin="miter"/></svg>
<svg style="left:1660px;top:943.4px;" width="20" height="14.2" viewBox="0 0 20 14.2"><path d="M0 0h8.500v2.200H20V14.200H0z" fill="#c4c4c4"/></svg>
<svg style="left:1685.2px;top:967.5px;" width="17" height="15" viewBox="0 0 17 15"><path d="M0 2.600h2.500V0h4v2.600h4V0h4v2.600H17V15H0z" fill="#c4c4c4"/><text x="3.500" y="12.800" font-size="11.500" font-style="italic" font-weight="bold" font-family="Liberation Serif" fill="#2a2a2a">fx</text></svg>
<svg style="left:1661.5px;top:1013px;" width="17" height="17" viewBox="0 0 17 17"><path d="M0 3h2.500V0h4v3h4V0h4v3H17v14H0z" fill="#c4c4c4"/><text x="1.200" y="15" font-size="11.500" font-weight="bold" font-family="Liberation Sans" fill="#3c3c3c" textLength="14.5" lengthAdjust="spacingAndGlyphs">32</text></svg>
<svg style="left:1686.4px;top:1013px;" width="16.6" height="17" viewBox="0 0 16.6 17"><path d="M0 3h2.500V0h4v3h3.600V0h4v3h2.500v14H0z" fill="#c4c4c4"/><path d="M3 8h5M3 11h4M3 14h5" stroke="#3c3c3c" stroke-width="1.300"/><path d="M9.500 7l5 4 -5 4z" fill="#3c3c3c"/></svg>
<svg style="left:1855.8px;top:1013.2px;" width="16.4" height="16.4" viewBox="0 0 16.4 16.4"><circle cx="8.200" cy="8.200" r="7.400" stroke="#e4e4e4" stroke-width="1.400" fill="none"/><circle cx="8.200" cy="4.600" r="1.200" fill="#e4e4e4"/><path d="M6.600 7.300h2.400v5M6.400 12.500h3.800" stroke="#e4e4e4" stroke-width="1.400" fill="none"/></svg>
<svg style="left:1867.7px;top:1043.3px;" width="16.8" height="16.9" viewBox="0 0 16.8 16.9"><path d="M0 0h16.800v16.900H7.600V9.300H0z" fill="#c4c4c4"/><path d="M0.500 11l5.600 5.600V11z" fill="#c4c4c4"/></svg>
<svg style="left:345.3px;top:780.5px;" width="7" height="7" viewBox="0 0 7 7"><path d="M0.5 0.5L6.5 6.5M6.5 0.5L0.5 6.5" stroke="#c4c4c4" stroke-width="1.3" fill="none"/></svg>
<svg style="left:449.3px;top:778px;" width="11.5" height="10" viewBox="0 0 11.5 10"><path d="M0 1h11.5M0 5.0h11.5M0 9h11.5" stroke="#c4c4c4" stroke-width="1.6" fill="none"/></svg>
<svg style="left:147.5px;top:815.5px;" width="22" height="13.5" viewBox="0 0 22 13.5"><circle cx="5.600" cy="5.600" r="4.700" stroke="#c4c4c4" stroke-width="1.500" fill="none"/><path d="M9 9l4 4.200" stroke="#c4c4c4" stroke-width="1.700"/><path d="M14.300 7.500l3.100 3 3.100 -3" stroke="#c4c4c4" stroke-width="1.400" fill="none"/></svg>
<svg style="left:566px;top:813.4px;" width="25" height="21" viewBox="0 0 25 21"><g fill="#c4c4c4"><rect x="3" y="3.3" width="5.3" height="3.7" rx="0.6"/><path d="M0 5.1l3 -1.400v2.800z"/><rect x="15.600" y="3" width="5.300" height="4" rx="0.600"/><rect x="15.600" y="10" width="5.300" height="4" rx="0.600"/><path d="M18 16.800l2.700 3.200 2.700 -3.200z"/></g><path d="M8.300 5.100H15.600M11.400 5.100V12H15.600" stroke="#c4c4c4" stroke-width="1.300" fill="none"/></svg>
<svg style="left:599.8px;top:813.4px;" width="21.7" height="20" viewBox="0 0 21.7 20"><rect x="0" y="10.200" width="21.700" height="7.800" fill="#4a4a4a"/><g fill="#c4c4c4"><path d="M5 8.800Q5 1.200 10.900 1.200T16.800 8.800z"/><rect x="1.200" y="6.800" width="4.400" height="2.600" rx="0.800"/><rect x="16.200" y="6.800" width="4.400" height="2.600" rx="0.800"/><rect x="8.900" y="8" width="4" height="8.200" rx="2"/></g><circle cx="8.500" cy="5.600" r="1.350" fill="#1e1e1e"/><circle cx="13.300" cy="5.600" r="1.350" fill="#1e1e1e"/></svg>
<svg style="left:632.6px;top:813.4px;" width="21.4" height="20" viewBox="0 0 21.4 20"><path d="M0.500 4.800h6.300v10.400h7.400v4.300H0.500z" fill="#c4c4c4"/><rect x="6.800" y="0.100" width="13.600" height="15.100" fill="#c4c4c4"/><rect x="9.700" y="1.200" width="7.800" height="12.900" fill="#dedede"/><path d="M11.500 7.600h4.200" stroke="#444" stroke-width="1.200"/><path d="M8.250 1.500v13M18.950 1.500v13M2 6.500v12M3 17.600h10" stroke="#2a2a2a" stroke-width="1.100" stroke-dasharray="1.300 1.500"/></svg>
<svg style="left:666.3px;top:813.4px;" width="20.6" height="20" viewBox="0 0 20.6 20"><circle cx="7.900" cy="12.400" r="6.400" fill="#1e1e1e" stroke="#c4c4c4" stroke-width="1.500"/><circle cx="10.400" cy="9.800" r="6.400" fill="#1e1e1e" stroke="#c4c4c4" stroke-width="1.500"/><circle cx="13" cy="7.200" r="6.400" fill="#585858" stroke="#c4c4c4" stroke-width="1.500"/></svg>
<svg style="left:697.5px;top:812.4px;" width="23" height="21" viewBox="0 0 23 21"><rect x="2.300" y="3.800" width="20" height="16.400" stroke="#c4c4c4" stroke-width="1.500" fill="none"/><path d="M7.700 0.500v3.300M11.900 0.500v3.300M16.600 0.500v3.300M0.300 7.300h2M0.300 11.900h2M0.300 17.200h2" stroke="#c4c4c4" stroke-width="1.400"/><path d="M4.800 7.200C9.500 7.200 10.500 11 12.500 13.500S16.500 16.400 19.800 16.400" stroke="#c4c4c4" stroke-width="1.500" fill="none"/></svg>
<svg style="left:10.5px;top:856px;" width="15" height="10.5" viewBox="0 0 15 10.5"><path d="M0 5.25Q7.5 -4.7250000000000005 15 5.25Q7.5 15.225 0 5.25z" fill="#d0d0d0"/><circle cx="7.5" cy="5.25" r="3.36" fill="#1e1e1e"/><circle cx="7.5" cy="5.25" r="1.7325000000000002" fill="#d0d0d0"/></svg>
<svg style="left:30.5px;top:853px;" width="16.5" height="16.5" viewBox="0 0 16.5 16.5"><path d="M0 5h3.200L8.500 0.500v15.500L3.200 11.500H0z" fill="#d0d0d0"/><path d="M11 4.500q2 3.700 0 7.400M13.800 2q3.500 6.200 0 12.400" stroke="#d0d0d0" stroke-width="1.500" fill="none"/></svg>
<div style="left:53.8px;top:856px;width:10.5px;height:10.5px;background:#d0d0d0;border-radius:50%;"></div>
<svg style="left:73px;top:853.7px;" width="13.3" height="13.8" viewBox="0 0 13.3 13.8"><path d="M3.200 6.500V4a3.450 3.450 0 0 1 6.900 0v2.500" stroke="#d0d0d0" stroke-width="1.800" fill="none"/><rect x="0" y="6" width="13.300" height="7.800" rx="0.800" fill="#d0d0d0"/><rect x="5.800" y="8.500" width="1.800" height="3" fill="#1e1e1e"/></svg>
<svg style="left:114.3px;top:853.3px;" width="17" height="16.5" viewBox="0 0 17 16.5"><path d="M0.500 1.500q0 -1 1 -1H8.500L16.500 8.700 9 16 0.500 8z" fill="#d0d0d0"/><circle cx="4" cy="4" r="1.500" fill="#1e1e1e"/></svg>
<svg style="left:371.3px;top:854px;" width="16.3" height="14" viewBox="0 0 16.3 14"><path d="M1.500 7Q1.500 1 8.150 1T14.800 7" stroke="#d0d0d0" stroke-width="1.500" fill="none"/><path d="M0 7.500h16.300M8.150 1v12M5 9.500v3M11.300 9.500v3" stroke="#d0d0d0" stroke-width="1.500"/><circle cx="5.500" cy="4.500" r="1.100" fill="#d0d0d0"/></svg>
<svg style="left:393px;top:854.3px;" width="14" height="14" viewBox="0 0 14 14"><circle cx="7" cy="7" r="2.800" stroke="#d0d0d0" stroke-width="1.500" fill="none"/><path d="M7 0v3M7 11v3M0 7h3M11 7h3M2 2l2.200 2.200M9.800 9.800L12 12M12 2L9.800 4.200M4.200 9.800L2 12" stroke="#d0d0d0" stroke-width="1.500"/></svg>
<svg style="left:412.5px;top:854.3px;" width="14.5" height="14" viewBox="0 0 14.5 14"><path d="M0 0h3v3H0zM3 3h2.800v2.800H3zM5.800 5.800h3v3h-3zM8.800 8.800h2.800v2.800H8.800zM11.600 11.200H14.500V14h-2.900z" fill="#d0d0d0"/></svg>
<svg style="left:433.8px;top:852.5px;" width="14" height="17" viewBox="0 0 14 17"><text x="0" y="13.500" font-size="17" font-style="italic" font-family="Liberation Serif" fill="#d0d0d0">fx</text></svg>
<svg style="left:453px;top:853.5px;" width="16.5" height="15" viewBox="0 0 16.5 15"><rect x="0" y="0" width="16.500" height="15" fill="#d0d0d0"/><path d="M4 2h8.500v4.500H4zM4 8.500h8.500V13H4z" fill="#1e1e1e"/><path d="M2 1v13M14.500 1v13" stroke="#1e1e1e" stroke-width="1.300" stroke-dasharray="1.500 1.500"/></svg>
<svg style="left:473px;top:853px;" width="18.7" height="17" viewBox="0 0 18.7 17"><circle cx="11.500" cy="6.500" r="6.200" fill="#d0d0d0"/><circle cx="9" cy="8.500" r="6.200" fill="#8a8a8a" stroke="#1e1e1e" stroke-width="0.800"/><circle cx="6.800" cy="10.300" r="6" fill="none" stroke="#d0d0d0" stroke-width="1.400"/></svg>
<svg style="left:494.9px;top:854px;" width="15.8" height="15.8" viewBox="0 0 15.8 15.8"><circle cx="7.900" cy="7.900" r="7" stroke="#d0d0d0" stroke-width="1.500" fill="none"/><path d="M3 12.800A7 7 0 0 1 12.800 3z" fill="#d0d0d0"/></svg>
<svg style="left:516.6px;top:853.5px;" width="14" height="16" viewBox="0 0 14 16"><path d="M7 1l6 3.300v7.400L7 15 1 11.700V4.300zM1 4.300l6 3.300 6 -3.300M7 7.600V15" stroke="#d0d0d0" stroke-width="1.300" fill="none"/></svg>
<svg style="left:11.5px;top:1057.5px;" width="15" height="15" viewBox="0 0 15 15"><rect x="0.700" y="0.700" width="10" height="10" rx="1.500" stroke="#c4c4c4" stroke-width="1.400" fill="none"/><rect x="4.300" y="4.300" width="10" height="10" rx="1.500" stroke="#c4c4c4" stroke-width="1.400" fill="#3c3c3c"/><rect x="7" y="7" width="4.600" height="4.600" stroke="#c4c4c4" stroke-width="1.200" fill="none"/></svg>
<svg style="left:36.4px;top:1057px;" width="16.5" height="16.5" viewBox="0 0 16.5 16.5"><circle cx="6.500" cy="6.500" r="5.700" stroke="#c4c4c4" stroke-width="1.400" fill="none"/><rect x="7" y="7" width="8.500" height="8.500" stroke="#c4c4c4" stroke-width="1.400" fill="none"/></svg>
<span style="left:63.3px;top:1057.01px;font-size:17px;line-height:17px;color:#c4c4c4;font-weight:400;transform:scaleX(1.0901);">{</span>
<span style="left:73px;top:1057.01px;font-size:17px;line-height:17px;color:#c4c4c4;font-weight:400;transform:scaleX(1.0901);">}</span>
<svg style="left:87.9px;top:1057px;" width="18.5" height="15.5" viewBox="0 0 18.5 15.5"><circle cx="6.500" cy="7" r="5.500" fill="#c4c4c4"/><path d="M0 15.500q0 -4 6.500 -4t6.500 4z" fill="#c4c4c4"/><path d="M11.500 5.500l3.500 -3.500 3 3 -3.500 3.500zM10.500 6.500l3 3 -4 1z" fill="#c4c4c4"/></svg>
<svg style="left:1589.2px;top:850.3px;" width="15" height="18.7" viewBox="0 0 15 18.7"><path d="M1 0h13q1 0 1 1v10.500L7.500 18.700 0 11.500V1q0 -1 1 -1z" fill="#c4c4c4"/></svg>
<svg style="left:1584.8px;top:878.4px;" width="20.2" height="16.4" viewBox="0 0 20.2 16.4"><path d="M9 1L1 9.500h10z" stroke="#c4c4c4" stroke-width="1.500" fill="none"/><rect x="11" y="3.500" width="9" height="7" fill="#c4c4c4"/><circle cx="9.500" cy="11.500" r="3.700" stroke="#c4c4c4" stroke-width="1.500" fill="#1e1e1e"/></svg>
<svg style="left:747.2px;top:1061.2px;" width="12.6" height="7.1" viewBox="0 0 12.6 7.1"><path d="M0 7.100l4.500 -5 2.300 2 2 -2.800 3.800 5.800z" fill="#c4c4c4"/></svg>
<svg style="left:770.6px;top:1058px;" width="14.2" height="14.2" viewBox="0 0 14.2 14.2"><circle cx="7.100" cy="7.100" r="5.700" stroke="#d8d8d8" stroke-width="2.200" fill="none"/></svg>
<div style="left:790.3px;top:1064.3px;width:62px;height:1.5px;background:#3e3e3e;"></div>
<svg style="left:858.3px;top:1058.5px;" width="22.5" height="11.5" viewBox="0 0 22.5 11.5"><path d="M0 11.500l7 -9 4 4.500 3.500 -7 8 11.500z" fill="#c4c4c4"/></svg>
<svg style="left:448px;top:172px;overflow:hidden;" width="1134" height="551" viewBox="448 172 1134 551"><g fill="#000" stroke="none"><polygon points="1119.3,302.2 1124.5,288.8 1138.6,279.9 1147.5,268.8 1160.1,259.9 1195.7,255.5 1211.3,254.0 1226.8,250.3 1245.4,254.0 1257.2,246.6 1275.8,236.2 1292.8,237.7 1295.8,245.8 1283.9,253.2 1281.0,259.9 1285.4,271.0 1286.2,284.4 1298.8,291.1 1316.6,291.1 1329.9,308.1 1344.1,316.1 1353.7,328.0 1366.4,327.2 1376.7,319.8 1378.2,305.1 1370.8,294.8 1376.0,286.6 1379.7,291.0 1387.1,295.5 1397.5,298.5 1403.4,315.5 1409.4,321.5 1419.0,321.5 1427.2,315.5 1433.1,319.2 1442.0,317.7 1448.7,312.0 1452.4,307.4 1449.4,292.5 1453.1,280.7 1450.2,262.9 1451.6,254.0 1450.9,245.8 1444.2,240.6 1438.3,250.3 1427.2,245.8 1413.8,249.5 1407.1,239.2 1407.1,230.3 1399.7,221.4 1402.0,209.5 1399.6,204.3 1416.8,199.5 1432.0,199.9 1441.5,200.6 1444.0,194.7 1450.0,198.0 1461.6,194.7 1472.7,189.5 1472.7,179.8 1478.3,197.6 1485.0,224.3 1499.1,299.2 1505.8,328.7 1508.0,356.2 1507.2,382.1 1508.7,418.5 1506.5,435.5 1505.8,476.9 1499.8,522.9 1498.3,534.0 1492.4,533.5 1485.7,518.4 1489.4,502.8 1487.2,481.3 1491.7,466.5 1491.7,456.1 1487.2,441.4 1488.0,425.9 1477.6,413.3 1475.4,399.9 1475.4,376.2 1469.4,365.8 1465.7,346.5 1461.3,336.9 1450.0,333.5 1441.0,340.0 1439.0,349.5 1445.0,361.4 1455.3,379.2 1459.8,395.5 1460.5,408.8 1467.2,419.2 1464.2,434.0 1465.7,453.3 1469.4,473.2 1469.4,480.6 1468.7,516.2 1459.0,535.5 1457.6,548.1 1474.6,558.4 1473.1,571.8 1487.2,584.4 1480.8,614.2 1455.0,661.7 1435.8,707.5 1424.0,727.0 1273.3,727.0 1273.3,711.7 1260.8,690.8 1253.3,675.0 1251.7,655.8 1269.2,633.3 1266.7,623.3 1251.7,620.0 1236.7,627.5 1226.7,626.7 1225.8,605.8 1216.7,600.8 1200.0,605.0 1171.7,630.0 1163.3,635.0 1151.7,634.2 1127.5,620.0 1116.7,625.8 1106.7,625.0 1092.5,615.0 1081.7,589.2 1038.3,566.7 1035.0,555.0 1030.8,538.3 1027.5,519.2 1020.0,503.3 1018.3,490.0 1021.7,481.7 1032.5,471.7 1035.0,460.0 1046.7,445.0 1045.8,436.7 1037.5,426.7 1035.0,416.7 1043.3,400.0 1045.8,385.8 1057.5,366.7 1067.5,360.8 1080.0,341.7 1086.7,335.8 1100.0,330.8 1117.5,330.0 1122.5,317.5 1120.0,305.0"/><polygon points="1088.9,168.0 1089.7,181.3 1096.3,189.5 1094.1,200.6 1099.3,208.0 1099.3,216.9 1102.3,228.8 1114.9,235.4 1125.3,230.3 1134.9,237.7 1138.6,251.0 1147.5,252.5 1163.1,241.4 1183.1,234.7 1186.8,217.6 1195.0,203.6 1193.5,191.0 1200.9,186.5 1211.3,175.4 1209.8,168.0"/><polygon points="1339.7,168.0 1347.1,184.3 1351.5,199.1 1358.9,208.0 1366.4,215.4 1372.3,221.4 1387.1,234.7 1390.5,240.6 1393.0,231.7 1387.1,225.8 1375.3,219.9 1364.9,209.5 1361.9,203.6 1366.4,194.7 1377.5,196.1 1384.2,191.0 1394.5,187.2 1394.5,179.8 1391.6,168.0"/><polygon points="444.0,569.3 465.0,566.5 490.0,565.0 497.0,559.5 509.5,573.4 515.0,586.0 531.7,604.0 554.0,609.6 573.4,618.0 604.0,619.3 629.0,630.4 637.4,638.7 634.6,647.0 650.0,655.4 645.7,668.0 631.8,670.7 618.0,687.4 618.0,693.0 627.6,698.5 637.4,688.8 654.0,684.6 658.0,679.0 662.4,686.0 656.8,694.3 651.0,706.9 662.4,704.0 670.7,694.3 695.7,686.0 702.7,691.6 700.0,702.7 708.0,708.0 720.8,701.3 733.0,701.3 773.6,715.0 784.7,718.0 790.0,727.0 444.0,727.0"/></g><g fill="#677be0" stroke="#677be0" stroke-width="4" stroke-linejoin="round"><polygon points="1312.0,184.0 1318.0,182.5 1322.8,187.2 1336.7,197.3 1339.6,203.9 1337.0,208.4 1334.0,213.4 1335.7,219.0 1337.4,229.6 1333.9,233.5 1327.0,229.5 1321.5,222.3 1316.5,212.3 1317.0,202.3 1312.7,193.9 1311.5,188.0"/><polygon points="1281.0,168.0 1296.0,168.0 1297.0,178.0 1295.0,187.0 1288.0,190.0 1283.0,186.0 1281.0,178.0"/><polygon points="444.0,465.0 452.0,465.5 458.0,468.0 463.0,472.0 470.0,474.5 480.0,476.0 488.0,479.0 489.5,484.0 485.0,487.5 474.0,488.5 466.0,487.0 458.0,487.5 450.0,486.0 444.0,485.0"/></g><polygon points="1414.9,168.0 1430.5,168.0 1431.0,177.0 1436.4,178.5 1445.3,182.5 1451.2,180.5 1453.4,168.0 1472.0,168.0 1472.7,180.0 1472.0,187.0 1466.0,190.0 1459.0,190.0 1456.0,193.5 1448.0,195.0 1443.8,192.5 1440.8,192.4 1437.0,196.0 1431.9,199.1 1424.5,202.1 1415.6,200.6 1414.9,197.6 1421.5,194.7 1420.0,190.2 1414.9,183.5" fill="#677be0" stroke="#677be0" stroke-width="1.5" stroke-linejoin="round"/><polygon points="1423.0,182.1 1428.2,179.8 1431.9,184.3 1434.1,189.5 1440.8,196.1 1441.5,199.9 1437.8,200.6 1434.1,197.6 1428.2,191.7 1424.5,187.2" fill="#000"/><polygon points="1119.3,302.2 1124.5,288.8 1138.6,279.9 1147.5,268.8 1160.1,259.9 1195.7,255.5 1211.3,254.0 1226.8,250.3 1245.4,254.0 1257.2,246.6 1275.8,236.2 1292.8,237.7 1295.8,245.8 1283.9,253.2 1281.0,259.9 1285.4,271.0 1286.2,284.4 1298.8,291.1 1316.6,291.1 1329.9,308.1 1344.1,316.1 1353.7,328.0 1366.4,327.2 1376.7,319.8 1378.2,305.1 1370.8,294.8 1376.0,286.6 1379.7,291.0 1387.1,295.5 1397.5,298.5 1403.4,315.5 1409.4,321.5 1419.0,321.5 1427.2,315.5 1433.1,319.2 1442.0,317.7 1448.7,312.0 1452.4,307.4 1449.4,292.5 1453.1,280.7 1450.2,262.9 1451.6,254.0 1450.9,245.8 1444.2,240.6 1438.3,250.3 1427.2,245.8 1413.8,249.5 1407.1,239.2 1407.1,230.3 1399.7,221.4 1402.0,209.5 1399.6,204.3 1416.8,199.5 1432.0,199.9 1441.5,200.6 1444.0,194.7 1450.0,198.0 1461.6,194.7 1472.7,189.5 1472.7,179.8 1478.3,197.6 1485.0,224.3 1499.1,299.2 1505.8,328.7 1508.0,356.2 1507.2,382.1 1508.7,418.5 1506.5,435.5 1505.8,476.9 1499.8,522.9 1498.3,534.0 1492.4,533.5 1485.7,518.4 1489.4,502.8 1487.2,481.3 1491.7,466.5 1491.7,456.1 1487.2,441.4 1488.0,425.9 1477.6,413.3 1475.4,399.9 1475.4,376.2 1469.4,365.8 1465.7,346.5 1461.3,336.9 1450.0,333.5 1441.0,340.0 1439.0,349.5 1445.0,361.4 1455.3,379.2 1459.8,395.5 1460.5,408.8 1467.2,419.2 1464.2,434.0 1465.7,453.3 1469.4,473.2 1469.4,480.6 1468.7,516.2 1459.0,535.5 1457.6,548.1 1474.6,558.4 1473.1,571.8 1487.2,584.4 1480.8,614.2 1455.0,661.7 1435.8,707.5 1424.0,727.0 1273.3,727.0 1273.3,711.7 1260.8,690.8 1253.3,675.0 1251.7,655.8 1269.2,633.3 1266.7,623.3 1251.7,620.0 1236.7,627.5 1226.7,626.7 1225.8,605.8 1216.7,600.8 1200.0,605.0 1171.7,630.0 1163.3,635.0 1151.7,634.2 1127.5,620.0 1116.7,625.8 1106.7,625.0 1092.5,615.0 1081.7,589.2 1038.3,566.7 1035.0,555.0 1030.8,538.3 1027.5,519.2 1020.0,503.3 1018.3,490.0 1021.7,481.7 1032.5,471.7 1035.0,460.0 1046.7,445.0 1045.8,436.7 1037.5,426.7 1035.0,416.7 1043.3,400.0 1045.8,385.8 1057.5,366.7 1067.5,360.8 1080.0,341.7 1086.7,335.8 1100.0,330.8 1117.5,330.0 1122.5,317.5 1120.0,305.0" fill="none" stroke="#677be0" stroke-width="2" stroke-linejoin="round"/><polygon points="1088.9,168.0 1089.7,181.3 1096.3,189.5 1094.1,200.6 1099.3,208.0 1099.3,216.9 1102.3,228.8 1114.9,235.4 1125.3,230.3 1134.9,237.7 1138.6,251.0 1147.5,252.5 1163.1,241.4 1183.1,234.7 1186.8,217.6 1195.0,203.6 1193.5,191.0 1200.9,186.5 1211.3,175.4 1209.8,168.0" fill="none" stroke="#677be0" stroke-width="2" stroke-linejoin="round"/><polygon points="1339.7,168.0 1347.1,184.3 1351.5,199.1 1358.9,208.0 1366.4,215.4 1372.3,221.4 1387.1,234.7 1390.5,240.6 1393.0,231.7 1387.1,225.8 1375.3,219.9 1364.9,209.5 1361.9,203.6 1366.4,194.7 1377.5,196.1 1384.2,191.0 1394.5,187.2 1394.5,179.8 1391.6,168.0" fill="none" stroke="#677be0" stroke-width="2" stroke-linejoin="round"/><polygon points="444.0,569.3 465.0,566.5 490.0,565.0 497.0,559.5 509.5,573.4 515.0,586.0 531.7,604.0 554.0,609.6 573.4,618.0 604.0,619.3 629.0,630.4 637.4,638.7 634.6,647.0 650.0,655.4 645.7,668.0 631.8,670.7 618.0,687.4 618.0,693.0 627.6,698.5 637.4,688.8 654.0,684.6 658.0,679.0 662.4,686.0 656.8,694.3 651.0,706.9 662.4,704.0 670.7,694.3 695.7,686.0 702.7,691.6 700.0,702.7 708.0,708.0 720.8,701.3 733.0,701.3 773.6,715.0 784.7,718.0 790.0,727.0 444.0,727.0" fill="none" stroke="#677be0" stroke-width="2" stroke-linejoin="round"/><g fill="none" stroke="#677be0" stroke-width="2"><path d="M1110.5 219 L1140 198.7 L1163.2 176.1 L1166 172"/><path d="M1110.5 219 L1108 226 L1126.6 229.9 L1131 214 L1156.2 200.3 L1180.4 176.1 L1184 172"/><path d="M1160.1 262.1 L1187.5 279.2 L1200.1 287.3 L1208.3 301.4 L1203.1 314.8"/><path d="M1160.1 262.1 L1147.5 282.2 L1175 326.6 L1203 315"/><path d="M1187.5 279.2 L1186.8 335"/><path d="M1226.8 250.3 Q1196 262 1187.5 279.2"/><path d="M1248.3 268.8 L1240.9 277.7 L1217.2 298.5 L1205 314"/><path d="M1203 315 L1341.6 342.7 L1392.7 349.2 L1396 352"/><path d="M1186.3 335.8 Q1215 360 1261.7 369.2 T1317.5 377 Q1365 376 1395.3 352"/><path d="M1208 315 L1207.8 335.8 L1191.7 400.3 L1128 540 L1095 550 L1062 560 L1038 558 L1035 555"/><path d="M1203 315 Q1140 345 1115.3 377 Q1065 455 1067.5 493.3 Q1067 535 1100 551.7 L1117.5 562.5 L1144.7 565 L1237.5 564.2 Q1275 574 1289.7 586.2 Q1303 600 1306.1 618.4 L1322.8 701.2 L1330 723"/><path d="M1068.3 513.3 L1136.7 505.5 L1240.8 475 L1258.3 472.8 Q1300 476 1324.4 495.9 Q1365 520 1372.2 548 L1365.800 709.300 L1360 723"/><path d="M1068.3 513.3 L1047.5 517.5 Q1036 524 1035.3 532 L1034.2 548.3 L1035 555"/><path d="M1395.3 352 L1454.5 318.5"/><path d="M1395.3 352 L1440 322 L1456 316"/><path d="M1395.3 352 Q1412 372 1415 383 L1438.3 454.5 L1440 471.7 Q1432 510 1431.4 534.6 Q1434 620 1426.5 665.2 Q1424 685 1407.7 706.6 Q1400 715 1385 723"/><path d="M1395.3 352 L1375.5 377.7 Q1366 395 1377.6 416.4 L1457.200 499.700"/><path d="M1266.4 662.5 L1373.8 468 L1423.8 448.6 L1451.8 454 L1466 476"/><path d="M1266.4 662.5 L1261 690 L1271 712 L1272 723"/><path d="M448 609.6 L491.4 579"/><path d="M448 612.3 L466.4 613.7 Q500 628 520.6 640.7 T563.1 677.7 L598.4 723"/><path d="M508.1 573.4 L467.8 627.6 L456.7 628.5 L448 629"/><path d="M448 622 Q480 640 501.2 656.3 L527.6 681.8 L562.3 721"/><path d="M654 690.2 L584.5 723"/><path d="M773.6 715.2 Q750 716 729 723"/><path d="M643 715.2 L623 723"/><rect x="1153.2" y="337.0" width="8.6" height="8.6" stroke-width="1.3"/><rect x="1111.0" y="372.7" width="8.6" height="8.6" stroke-width="1.3"/><rect x="1068.5" y="467.7" width="8.6" height="8.6" stroke-width="1.3"/><rect x="1068.5" y="517.4" width="8.6" height="8.6" stroke-width="1.3"/><rect x="1083.5" y="539.0" width="8.6" height="8.6" stroke-width="1.3"/><rect x="1095.7" y="547.4" width="8.6" height="8.6" stroke-width="1.3"/><rect x="1176.9" y="559.9" width="8.6" height="8.6" stroke-width="1.3"/><rect x="1233.2" y="559.9" width="8.6" height="8.6" stroke-width="1.3"/><rect x="1285.4" y="581.9" width="8.6" height="8.6" stroke-width="1.3"/><rect x="1301.8" y="614.1" width="8.6" height="8.6" stroke-width="1.3"/><rect x="1318.5" y="696.9" width="8.6" height="8.6" stroke-width="1.3"/><rect x="1337.3" y="338.4" width="8.6" height="8.6" stroke-width="1.3"/><rect x="1388.4" y="344.9" width="8.6" height="8.6" stroke-width="1.3"/><rect x="1392.7" y="345.2" width="8.6" height="8.6" stroke-width="1.3"/><rect x="1411.5" y="370.7" width="8.6" height="8.6" stroke-width="1.3"/><rect x="1409.9" y="378.7" width="8.6" height="8.6" stroke-width="1.3"/><rect x="1434.0" y="450.2" width="8.6" height="8.6" stroke-width="1.3"/><rect x="1435.7" y="467.4" width="8.6" height="8.6" stroke-width="1.3"/><rect x="1427.1" y="530.3" width="8.6" height="8.6" stroke-width="1.3"/><rect x="1422.2" y="660.9" width="8.6" height="8.6" stroke-width="1.3"/><rect x="1416.3" y="686.7" width="8.6" height="8.6" stroke-width="1.3"/><rect x="1403.4" y="702.3" width="8.6" height="8.6" stroke-width="1.3"/><rect x="1198.2" y="310.7" width="8.6" height="8.6" stroke-width="1.3"/><rect x="1201.7" y="308.7" width="8.6" height="8.6" stroke-width="1.3"/></g><path d="M1119.3 302.2h0M1121.9 295.5h0M1124.5 288.8h0M1131.5 284.4h0M1138.6 279.9h0M1143.0 274.4h0M1147.5 268.8h0M1153.8 264.4h0M1160.1 259.9h0M1169.0 258.8h0M1177.9 257.7h0M1186.8 256.6h0M1195.7 255.5h0M1203.5 254.8h0M1211.3 254.0h0M1219.0 252.2h0M1226.8 250.3h0M1236.1 252.2h0M1245.4 254.0h0M1251.3 250.3h0M1257.2 246.6h0M1263.4 243.1h0M1269.6 239.7h0M1275.8 236.2h0M1284.3 236.9h0M1292.8 237.7h0M1295.8 245.8h0M1289.8 249.5h0M1283.9 253.2h0M1281.0 259.9h0M1285.4 271.0h0M1285.8 277.7h0M1286.2 284.4h0M1292.5 287.8h0M1298.8 291.1h0M1307.7 291.1h0M1316.6 291.1h0M1321.0 296.8h0M1325.5 302.4h0M1329.9 308.1h0M1337.0 312.1h0M1344.1 316.1h0M1348.9 322.1h0M1353.7 328.0h0M1360.1 327.6h0M1366.4 327.2h0M1371.6 323.5h0M1376.7 319.8h0M1377.5 312.5h0M1378.2 305.1h0M1374.5 300.0h0M1370.8 294.8h0M1376.0 286.6h0M1379.7 291.0h0M1387.1 295.5h0M1397.5 298.5h0M1400.5 307.0h0M1403.4 315.5h0M1409.4 321.5h0M1419.0 321.5h0M1427.2 315.5h0M1433.1 319.2h0M1442.0 317.7h0M1448.7 312.0h0M1452.4 307.4h0M1450.9 299.9h0M1449.4 292.5h0M1453.1 280.7h0M1450.2 262.9h0M1451.6 254.0h0M1450.9 245.8h0M1444.2 240.6h0M1438.3 250.3h0M1427.2 245.8h0M1420.5 247.7h0M1413.8 249.5h0M1407.1 239.2h0M1407.1 230.3h0M1399.7 221.4h0M1402.0 209.5h0M1399.6 204.3h0M1416.8 199.5h0M1432.0 199.9h0M1441.5 200.6h0M1444.0 194.7h0M1450.0 198.0h0M1461.6 194.7h0M1472.7 189.5h0M1472.7 179.8h0M1478.3 197.6h0M1485.0 224.3h0M1499.1 299.2h0M1505.8 328.7h0M1508.0 356.2h0M1507.2 382.1h0M1508.7 418.5h0M1506.5 435.5h0M1505.8 476.9h0M1499.8 522.9h0M1498.3 534.0h0M1492.4 533.5h0M1489.1 526.0h0M1485.7 518.4h0M1487.6 510.6h0M1489.4 502.8h0M1488.7 495.6h0M1487.9 488.5h0M1487.2 481.3h0M1489.5 473.9h0M1491.7 466.5h0M1491.7 456.1h0M1489.5 448.8h0M1487.2 441.4h0M1487.6 433.6h0M1488.0 425.9h0M1482.8 419.6h0M1477.6 413.3h0M1476.5 406.6h0M1475.4 399.9h0M1475.4 376.2h0M1469.4 365.8h0M1465.7 346.5h0M1461.3 336.9h0M1450.0 333.5h0M1441.0 340.0h0M1439.0 349.5h0M1442.0 355.4h0M1445.0 361.4h0M1450.2 370.3h0M1455.3 379.2h0M1459.8 395.5h0M1460.2 402.1h0M1460.5 408.8h0M1467.2 419.2h0M1465.7 426.6h0M1464.2 434.0h0M1465.7 453.3h0M1467.6 463.2h0M1469.4 473.2h0M1469.4 480.6h0M1468.7 516.2h0M1459.0 535.5h0M1458.3 541.8h0M1457.6 548.1h0M1474.6 558.4h0M1473.1 571.8h0M1487.2 584.4h0M1480.8 614.2h0M1455.0 661.7h0M1435.8 707.5h0M1424.0 727.0h0M1273.3 727.0h0M1273.3 711.7h0M1260.8 690.8h0M1253.3 675.0h0M1251.7 655.8h0M1269.2 633.3h0M1266.7 623.3h0M1251.7 620.0h0M1236.7 627.5h0M1226.7 626.7h0M1225.8 605.8h0M1216.7 600.8h0M1200.0 605.0h0M1171.7 630.0h0M1163.3 635.0h0M1151.7 634.2h0M1127.5 620.0h0M1116.7 625.8h0M1106.7 625.0h0M1092.5 615.0h0M1081.7 589.2h0M1038.3 566.7h0M1035.0 555.0h0M1030.8 538.3h0M1027.5 519.2h0M1020.0 503.3h0M1019.1 496.6h0M1018.3 490.0h0M1021.7 481.7h0M1027.1 476.7h0M1032.5 471.7h0M1035.0 460.0h0M1046.7 445.0h0M1045.8 436.7h0M1041.7 431.7h0M1037.5 426.7h0M1035.0 416.7h0M1043.3 400.0h0M1045.8 385.8h0M1057.5 366.7h0M1067.5 360.8h0M1080.0 341.7h0M1086.7 335.8h0M1100.0 330.8h0M1117.5 330.0h0M1120.0 323.8h0M1122.5 317.5h0M1121.2 311.2h0M1120.0 305.0h0M1088.9 168.0h0M1089.3 174.7h0M1089.7 181.3h0M1096.3 189.5h0M1094.1 200.6h0M1099.3 208.0h0M1099.3 216.9h0M1102.3 228.8h0M1108.6 232.1h0M1114.9 235.4h0M1125.3 230.3h0M1134.9 237.7h0M1136.8 244.3h0M1138.6 251.0h0M1147.5 252.5h0M1163.1 241.4h0M1183.1 234.7h0M1186.8 217.6h0M1195.0 203.6h0M1194.2 197.3h0M1193.5 191.0h0M1200.9 186.5h0M1211.3 175.4h0M1209.8 168.0h0M1339.7 168.0h0M1343.4 176.2h0M1347.1 184.3h0M1351.5 199.1h0M1358.9 208.0h0M1366.4 215.4h0M1372.3 221.4h0M1387.1 234.7h0M1390.5 240.6h0M1393.0 231.7h0M1387.1 225.8h0M1381.2 222.9h0M1375.3 219.9h0M1364.9 209.5h0M1361.9 203.6h0M1366.4 194.7h0M1377.5 196.1h0M1384.2 191.0h0M1394.5 187.2h0M1394.5 179.8h0M1391.6 168.0h0M444.0 569.3h0M465.0 566.5h0M473.3 566.0h0M481.7 565.5h0M490.0 565.0h0M497.0 559.5h0M503.2 566.5h0M509.5 573.4h0M512.2 579.7h0M515.0 586.0h0M531.7 604.0h0M539.1 605.9h0M546.6 607.7h0M554.0 609.6h0M573.4 618.0h0M604.0 619.3h0M629.0 630.4h0M637.4 638.7h0M634.6 647.0h0M650.0 655.4h0M645.7 668.0h0M638.8 669.4h0M631.8 670.7h0M618.0 687.4h0M618.0 693.0h0M627.6 698.5h0M637.4 688.8h0M645.7 686.7h0M654.0 684.6h0M658.0 679.0h0M662.4 686.0h0M656.8 694.3h0M651.0 706.9h0M662.4 704.0h0M670.7 694.3h0M695.7 686.0h0M702.7 691.6h0M700.0 702.7h0M708.0 708.0h0M720.8 701.3h0M733.0 701.3h0M773.6 715.0h0M784.7 718.0h0M790.0 727.0h0M444.0 727.0h0M1140.0 198.7h0M1163.2 176.1h0M1156.2 200.3h0M1180.4 176.1h0M1131.0 214.0h0M1114.0 216.0h0M1126.6 229.9h0M1110.5 219.0h0M1200.1 287.3h0M1175.0 326.6h0M1186.3 335.8h0M1207.8 335.8h0M1191.7 400.3h0M1240.0 363.3h0M1261.7 369.2h0M1307.5 377.0h0M1317.5 377.0h0M1347.0 375.0h0M1371.2 366.9h0M1375.5 377.7h0M1369.5 392.2h0M1377.6 416.4h0M1128.0 540.0h0M1062.0 560.0h0M1068.3 513.3h0M1136.7 505.5h0M1240.8 475.0h0M1324.4 495.9h0M1372.2 548.0h0M1365.8 709.3h0M1373.8 468.0h0M1451.8 454.0h0M1144.7 565.0h0M1035.3 532.0h0M1266.4 662.5h0M1240.9 277.7h0M1248.3 268.8h0M491.4 579.0h0M466.4 613.7h0M520.6 640.7h0M545.1 658.2h0M563.1 677.7h0M467.8 627.6h0M456.7 628.5h0M501.2 656.3h0M527.6 681.8h0M562.3 720.8h0M1457.2 499.7h0M1463.0 492.0h0M1461.0 497.0h0M1438.6 205.0h0M643.0 715.2h0M1441.0 318.0h0M1440.5 324.0h0M1441.0 330.0h0M1444.0 335.5h0M1450.0 332.5h0M1456.0 332.0h0M1462.0 334.0h0M1466.0 339.0h0M1462.0 312.0h0M1468.0 309.0h0M1473.0 313.0h0M1471.0 319.0h0M1465.0 322.0h0M1447.0 322.0h0M1419.0 337.0h0M1423.0 333.0h0M1428.0 330.0h0M1414.0 341.0h0M1040.8 521.7h0M1047.5 517.5h0M1217.2 298.5h0M1212.0 303.0h0M1190.5 270.3h0M1208.3 255.5h0" stroke="#677be0" stroke-width="8.8" stroke-linecap="round" fill="none"/><g fill="#677be0"><circle cx="1160.1" cy="262.1" r="4.6"/><circle cx="1227.1" cy="250.3" r="4.6"/><circle cx="1276" cy="236.9" r="4.6"/><circle cx="1258.3" cy="472.8" r="4.6"/><circle cx="1423.8" cy="448.6" r="4.6"/><circle cx="1455.3" cy="316.3" r="4.6"/><circle cx="1316.5" cy="186" r="4.6"/><circle cx="509.5" cy="573" r="4.6"/><circle cx="695.7" cy="686" r="4.6"/><circle cx="773.6" cy="715" r="4.6"/><circle cx="448" cy="468" r="4.6"/><rect x="1112" y="557" width="11" height="11"/></g><g fill="none" stroke="#d5daf6" stroke-width="1.100"><circle cx="1160.1" cy="262.1" r="6.600"/><circle cx="1227.1" cy="250.3" r="6.600"/><circle cx="1276" cy="236.9" r="6.600"/><circle cx="1258.3" cy="472.8" r="6.600"/><circle cx="1423.8" cy="448.6" r="6.600"/><circle cx="1455.3" cy="316.3" r="6.600"/><circle cx="1316.5" cy="186" r="6.600"/><circle cx="509.5" cy="573" r="6.600"/><circle cx="695.7" cy="686" r="6.600"/><circle cx="773.6" cy="715" r="6.600"/><circle cx="448" cy="468" r="6.600"/></g></svg>
</div></body></html>
